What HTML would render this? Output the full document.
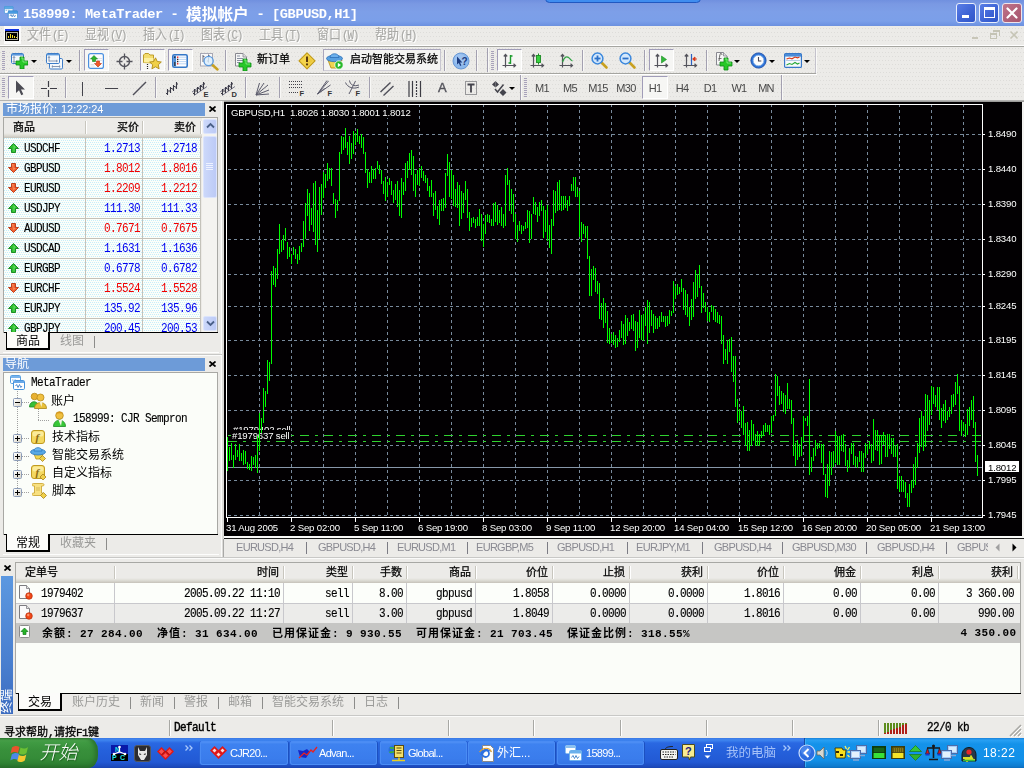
<!DOCTYPE html>
<html><head><meta charset="utf-8"><title>MetaTrader</title>
<style>
html,body{margin:0;padding:0;background:#ecebe8;}
body{width:1024px;height:768px;overflow:hidden;font-family:"Liberation Sans",sans-serif;font-size:11px;color:#000;}
#r{position:relative;width:1024px;height:768px;overflow:hidden;background:#ecebe8;}
#r span.a{will-change:transform;}
#r div,#r span.a,#r svg.a{position:absolute;box-sizing:border-box;}
.cj{font-family:"Liberation Sans","Noto Sans CJK SC",sans-serif;letter-spacing:0;white-space:nowrap;}
.ss{font-family:"Liberation Mono",monospace;font-size:11px;letter-spacing:-0.6px;white-space:nowrap;line-height:12px;-webkit-text-stroke:0.12px currentColor;transform:scaleY(1.143);transform-origin:0 100%;}
.th{font-family:"Liberation Sans",sans-serif;font-size:11px;letter-spacing:-0.7px;white-space:nowrap;}
.c9{font-family:"Liberation Sans",sans-serif;font-size:9.600px;letter-spacing:-0.17px;white-space:nowrap;color:#fff;line-height:10px;}
.hl{background:#fff;height:1px;}
.sh{background:#a5a5a0;height:1px;}
</style></head><body><svg width="0" height="0" style="position:absolute"><defs><pattern id="pd" width="6" height="8" patternUnits="userSpaceOnUse"><rect x="1" y="1" width="1" height="1" fill="#dddcd9"/><rect x="4" y="1" width="1" height="1" fill="#dddcd9"/><rect x="0" y="5" width="1" height="1" fill="#dddcd9"/><rect x="3" y="5" width="1" height="1" fill="#dddcd9"/></pattern><pattern id="pc" width="4" height="4" patternUnits="userSpaceOnUse"><rect x="0" y="0" width="1" height="1" fill="#c4eefc"/><rect x="2" y="0" width="1" height="1" fill="#c4eefc"/><rect x="1" y="2" width="1" height="1" fill="#c4eefc"/><rect x="3" y="2" width="1" height="1" fill="#c4eefc"/></pattern></defs></svg><div id="r">
<div style="left:0;top:0;width:1024px;height:26px;background:linear-gradient(#7090df 0,#7a99e3 4px,#7d9fe8 12px,#7b9fe9 21px,#7196e4 24px,#6c90de 26px);"></div>
<div style="left:545px;top:-6px;width:156px;height:9px;border-radius:6px;background:#3f8df0;border:1px solid #2158c0;"></div>
<svg class="a" style="left:4px;top:6px" width="14" height="13.200" viewBox="0 0 18 17">
 <rect x="0.5" y="0.5" width="11" height="9" rx="1.5" fill="#fff" stroke="#4a9ad8"/>
 <rect x="0.5" y="0.5" width="11" height="3" rx="1" fill="#5aa8e6" stroke="#4a9ad8"/>
 <rect x="5.5" y="6.5" width="12" height="10" rx="1.5" fill="#fff" stroke="#3a8ad0"/>
 <rect x="5.5" y="6.5" width="12" height="3" rx="1" fill="#4a9ee6" stroke="#3a8ad0"/>
 <path d="M7.5 13 l1.5 -2 l1.5 3 l1.5 -3 l1.5 3 l1.5 -2" fill="none" stroke="#3a7ac0" stroke-width="1"/>
 <path d="M2 5.500h2M5 5.500h2" stroke="#5a9ad0"/>
</svg>
<span class="a" style="left:23px;top:4px;color:#fff;font:bold 13.7px 'Liberation Mono',monospace;letter-spacing:-0.45px;white-space:nowrap;line-height:18px;">158999: MetaTrader - <span style="position:relative;top:1.500px;letter-spacing:0"><span class="cj" style="font-size:15.7px">模拟帐户</span></span> - [GBPUSD,H1]</span>
<!-- window buttons -->
<div style="left:956px;top:3px;width:20px;height:20px;border-radius:3px;border:1px solid #e8eefc;background:linear-gradient(135deg,#5a7ee6,#3c62d4 60%,#2f55c8);"></div>
<div style="left:962px;top:15px;width:7px;height:3px;background:#fff;"></div>
<div style="left:979px;top:3px;width:20px;height:20px;border-radius:3px;border:1px solid #e8eefc;background:linear-gradient(135deg,#5a7ee6,#3c62d4 60%,#2f55c8);"></div>
<div style="left:984px;top:7px;width:11px;height:11px;border:1px solid #fff;border-top-width:3px;"></div>
<div style="left:1002px;top:3px;width:20px;height:20px;border-radius:3px;border:1px solid #f0e4ea;background:linear-gradient(135deg,#c0748a,#b06078 60%,#a8566e);"></div>
<svg class="a" style="left:1002px;top:3px" width="20" height="20"><path d="M5.5 5.500l9 9M14.5 5.500l-9 9" stroke="#fff" stroke-width="2.2" stroke-linecap="round"/></svg>
<div style="left:0;top:26px;width:1024px;height:20px;background:#ecebe8;"></div><svg class="a" style="left:0;top:27px" width="1024" height="17" shape-rendering="crispEdges"><rect width="1024" height="17" fill="url(#pd)"/></svg><div style="left:4px;top:26px;width:17px;height:18px;background:#fbfbfa;"></div><svg class="a" style="left:5px;top:29px" width="14" height="12" viewBox="0 0 14 12"><rect width="14" height="12" fill="#000"/><rect width="14" height="2" fill="#1030e0"/><rect x="1.5" y="3.5" width="11" height="7" fill="#000" stroke="#b0b0a0" stroke-width="1"/><path d="M3.5 9v-2M5.500 9v-4M7.500 9v-3M9.500 9v-2M11.500 9v-1" stroke="#f0e020" stroke-width="1"/></svg><span class="a ss" style="left:28px;top:30px;color:#fff;"><span class="cj" style="font-size:12px">文件</span><span style="margin-left:1px;font-size:11px;letter-spacing:-1.2px">(<u>F</u>)</span></span><span class="a ss" style="left:27px;top:29px;color:#a9a9a6;"><span class="cj" style="font-size:12px">文件</span><span style="margin-left:1px;font-size:11px;letter-spacing:-1.2px">(<u>F</u>)</span></span><span class="a ss" style="left:86px;top:30px;color:#fff;"><span class="cj" style="font-size:12px">显视</span><span style="margin-left:1px;font-size:11px;letter-spacing:-1.2px">(<u>V</u>)</span></span><span class="a ss" style="left:85px;top:29px;color:#a9a9a6;"><span class="cj" style="font-size:12px">显视</span><span style="margin-left:1px;font-size:11px;letter-spacing:-1.2px">(<u>V</u>)</span></span><span class="a ss" style="left:144px;top:30px;color:#fff;"><span class="cj" style="font-size:12px">插入</span><span style="margin-left:1px;font-size:11px;letter-spacing:-1.2px">(<u>I</u>)</span></span><span class="a ss" style="left:143px;top:29px;color:#a9a9a6;"><span class="cj" style="font-size:12px">插入</span><span style="margin-left:1px;font-size:11px;letter-spacing:-1.2px">(<u>I</u>)</span></span><span class="a ss" style="left:202px;top:30px;color:#fff;"><span class="cj" style="font-size:12px">图表</span><span style="margin-left:1px;font-size:11px;letter-spacing:-1.2px">(<u>C</u>)</span></span><span class="a ss" style="left:201px;top:29px;color:#a9a9a6;"><span class="cj" style="font-size:12px">图表</span><span style="margin-left:1px;font-size:11px;letter-spacing:-1.2px">(<u>C</u>)</span></span><span class="a ss" style="left:260px;top:30px;color:#fff;"><span class="cj" style="font-size:12px">工具</span><span style="margin-left:1px;font-size:11px;letter-spacing:-1.2px">(<u>T</u>)</span></span><span class="a ss" style="left:259px;top:29px;color:#a9a9a6;"><span class="cj" style="font-size:12px">工具</span><span style="margin-left:1px;font-size:11px;letter-spacing:-1.2px">(<u>T</u>)</span></span><span class="a ss" style="left:318px;top:30px;color:#fff;"><span class="cj" style="font-size:12px">窗口</span><span style="margin-left:1px;font-size:11px;letter-spacing:-1.2px">(<u>W</u>)</span></span><span class="a ss" style="left:317px;top:29px;color:#a9a9a6;"><span class="cj" style="font-size:12px">窗口</span><span style="margin-left:1px;font-size:11px;letter-spacing:-1.2px">(<u>W</u>)</span></span><span class="a ss" style="left:376px;top:30px;color:#fff;"><span class="cj" style="font-size:12px">帮助</span><span style="margin-left:1px;font-size:11px;letter-spacing:-1.2px">(<u>H</u>)</span></span><span class="a ss" style="left:375px;top:29px;color:#a9a9a6;"><span class="cj" style="font-size:12px">帮助</span><span style="margin-left:1px;font-size:11px;letter-spacing:-1.2px">(<u>H</u>)</span></span><div style="left:972px;top:37px;width:6px;height:2px;background:#c8c6b8;"></div><div style="left:990px;top:33px;width:7px;height:6px;border:1px solid #c4c3b4;border-top-width:2px;"></div><div style="left:993px;top:30px;width:7px;height:6px;border:1px solid #c4c3b4;border-top-width:2px;border-left:0;border-bottom:0"></div><svg class="a" style="left:1009px;top:30px" width="10" height="10"><path d="M1.5 1.500l7 7M8.500 1.500l-7 7" stroke="#c6c5b6" stroke-width="1.6"/></svg><div class="hl" style="left:0;top:45px;width:1024px;"></div><div class="sh" style="left:0;top:46px;width:1024px;"></div><div style="left:0;top:47px;width:1024px;height:54px;background:#ecebe8;"></div><svg class="a" style="left:0;top:47px" width="1024" height="53" shape-rendering="crispEdges"><rect width="1024" height="53" fill="url(#pd)"/></svg><div class="sh" style="left:0;top:73px;width:816px;"></div><div class="hl" style="left:0;top:74px;width:817px;"></div><div class="sh" style="left:0;top:100px;width:1024px;background:#b4b4b2"></div><div style="left:2px;top:51px;width:3px;height:1px;background:#a8a2ba;"></div><div style="left:2px;top:53px;width:3px;height:1px;background:#a8a2ba;"></div><div style="left:2px;top:55px;width:3px;height:1px;background:#a8a2ba;"></div><div style="left:2px;top:57px;width:3px;height:1px;background:#a8a2ba;"></div><div style="left:2px;top:59px;width:3px;height:1px;background:#a8a2ba;"></div><div style="left:2px;top:61px;width:3px;height:1px;background:#a8a2ba;"></div><div style="left:2px;top:63px;width:3px;height:1px;background:#a8a2ba;"></div><div style="left:2px;top:65px;width:3px;height:1px;background:#a8a2ba;"></div><div style="left:2px;top:67px;width:3px;height:1px;background:#a8a2ba;"></div><div style="left:2px;top:69px;width:3px;height:1px;background:#a8a2ba;"></div><svg class="a" style="left:11px;top:53px" width="17" height="16" viewBox="0 0 17 16" ><rect x="0.5" y="0.5" width="12" height="10" rx="1.2" fill="#f4f8fc" stroke="#3c7cc8"/><rect x="1" y="1" width="11" height="1.6" fill="#5a98dc"/>
<path d="M3 3.500v6M1.800 5l1.200-1.500l1.200 1.500M1.800 8l1.200 1.500l1.200-1.500" stroke="#7a8ca8" fill="none" stroke-width="0.9"/>
<path d="M9 4h4v4h4v4h-4v4h-4v-4h-4v-4h4z" fill="#28c828" stroke="#0c8a14" stroke-width="0.8"/><path d="M10 5h2v4h4" stroke="#8cf08c" fill="none" stroke-width="0.8"/></svg><svg class="a" style="left:31px;top:60px" width="6" height="3" viewBox="0 0 6 3" ><path d="M0 0h6l-3 3z" fill="#000"/></svg><svg class="a" style="left:46px;top:53px" width="18" height="17" viewBox="0 0 18 17" ><rect x="3.5" y="5.5" width="13" height="10.5" rx="1.2" fill="#f4f8fc" stroke="#3c7cc8"/>
<rect x="0.5" y="0.5" width="13" height="10" rx="1.2" fill="#f4f8fc" stroke="#3c7cc8"/><rect x="1" y="1" width="12" height="1.4" fill="#5a98dc"/>
<path d="M3 3.500v5M3 8h8M2 5l1-1.500l1 1.500M10 7l1.500 1l-1.500 1" stroke="#7a8ca8" fill="none" stroke-width="0.9"/>
<path d="M6 13.500h8M7 12.500l-1.200 1l1.200 1M13 12.500l1.200 1l-1.200 1" stroke="#7a8ca8" fill="none" stroke-width="0.9"/></svg><svg class="a" style="left:66px;top:60px" width="6" height="3" viewBox="0 0 6 3" ><path d="M0 0h6l-3 3z" fill="#000"/></svg><div style="left:79px;top:50px;width:1px;height:21px;background:#a3a0b0;"></div><div style="left:80px;top:50px;width:1px;height:21px;background:#f8f8f6;"></div><div style="left:84px;top:49px;width:25px;height:22px;background:#f6f6f4;border:1px solid #a09cb8;border-right-color:#fff;border-bottom-color:#fff;"></div><svg class="a" style="left:88px;top:53px" width="16" height="16" viewBox="0 0 16 16" ><rect x="0.6" y="0.6" width="14.8" height="14.8" rx="2" fill="#fdfdfd" stroke="#4a90e0" stroke-width="1.2"/>
<path d="M9 5.500h5M9 7.500h5M2.500 11.500h4M2.500 13h4" stroke="#d8dce4" stroke-width="0.8"/>
<path d="M6 2.500l3.500 3.500h-2v2.500h-3v-2.500h-2z" fill="#2cb42c" stroke="#128018" stroke-width="0.6"/>
<path d="M10 14l3.500-3.500h-2v-2.500h-3v2.500h-2z" fill="#f05a28" stroke="#c03410" stroke-width="0.6"/></svg><svg class="a" style="left:116px;top:53px" width="17" height="17" viewBox="0 0 17 17" ><circle cx="8.5" cy="8.5" r="5" fill="none" stroke="#54545c" stroke-width="1.4"/><path d="M8.5 0.500v6M8.500 10.500v6M0.500 8.500h6M10.500 8.500h6" stroke="#54545c" stroke-width="1.3"/></svg><div style="left:140px;top:49px;width:25px;height:22px;background:#f6f6f4;border:1px solid #a09cb8;border-right-color:#fff;border-bottom-color:#fff;"></div><svg class="a" style="left:143px;top:53px" width="19" height="17" viewBox="0 0 19 17" ><path d="M0.5 9.500v-7.500l1.500-1.500h3.500l1.500 1.500h3.500v8z" fill="#f4dc6c" stroke="#b8941c" stroke-width="0.9"/><path d="M1 5h9.500v4.500h-9.500z" fill="#fcf0a0"/>
<path d="M4.500 11v1M4.500 13v1M4.500 15v1" stroke="#222" stroke-width="1.2"/>
<path d="M12.500 4.800l1.800 3.700l4 .5l-3 2.800l.8 4l-3.600-2l-3.600 2l.8-4l-3-2.800l4-.5z" fill="#f0d048" stroke="#b08a14" stroke-width="0.9"/></svg><div style="left:168px;top:49px;width:25px;height:22px;background:#f6f6f4;border:1px solid #a09cb8;border-right-color:#fff;border-bottom-color:#fff;"></div><svg class="a" style="left:172px;top:54px" width="16" height="14" viewBox="0 0 16 14" ><rect x="0.8" y="0.8" width="14.4" height="12.4" rx="1.5" fill="#fff" stroke="#3478c8" stroke-width="1.6"/>
<rect x="1.5" y="1.5" width="2.6" height="11" fill="#4a8cd8"/>
<path d="M7 3.200h7M7 5.400h7M7 7.600h7M7 9.800h7" stroke="#a8ccf0" stroke-width="0.8"/>
<rect x="5" y="2.5" width="1.4" height="1.4" fill="#e82020"/><rect x="5" y="4.7" width="1.4" height="1.4" fill="#222"/><rect x="5" y="6.9" width="1.4" height="1.4" fill="#222"/><rect x="5" y="9.1" width="1.4" height="1.4" fill="#e82020"/><rect x="2.2" y="2.5" width="1.2" height="1.4" fill="#111"/><rect x="2.2" y="8" width="1.2" height="4" fill="#333"/></svg><svg class="a" style="left:200px;top:53px" width="19" height="18" viewBox="0 0 19 18" ><rect x="0.5" y="0.5" width="12" height="12.5" fill="#f8f8f8" stroke="#a8a8b4"/><path d="M3 2v7M3 3.500h1.500M8.500 1.500v8M8.500 3h1.500M7 8h1.500" stroke="#6a6a78" stroke-width="1"/>
<path d="M12 11.500l5.500 5" stroke="#c8a020" stroke-width="2.4" stroke-linecap="round"/>
<circle cx="8.6" cy="8" r="4.6" fill="#d8ecfc" fill-opacity="0.8" stroke="#5a98dc" stroke-width="1.3"/></svg><div style="left:225px;top:50px;width:1px;height:21px;background:#a3a0b0;"></div><div style="left:226px;top:50px;width:1px;height:21px;background:#f8f8f6;"></div><svg class="a" style="left:235px;top:53px" width="17" height="18" viewBox="0 0 17 18" ><path d="M0.5 0.500h7.500l3.500 3.500v9h-11z" fill="#f6f6f6" stroke="#888890"/><path d="M8 0.500v3.500h3.500" fill="#ddd" stroke="#888890" stroke-width="0.8"/>
<path d="M2 3h3M2 5.500h6M2 7.500h6M2 9.500h3" stroke="#8890a0" stroke-width="1"/>
<path d="M8 6h4v4h4v4h-4v4h-4v-4h-4v-4h4z" fill="#28c828" stroke="#0c8a14" stroke-width="0.8"/><path d="M9 7h2v4h4" stroke="#8cf08c" fill="none" stroke-width="0.8"/></svg><span class="a" style="left:257px;top:54px;line-height:11px;"><span class="cj" style="font-size:11px;-webkit-text-stroke:0.25px currentColor">新订单</span></span><svg class="a" style="left:298px;top:52px" width="18" height="18" viewBox="0 0 18 18" ><path d="M9 0.800l8 8l-8 8l-8-8z" fill="#f4d44c" stroke="#c09a18" stroke-width="1.2" stroke-linejoin="round"/><path d="M9 3l5.800 5.800l-5.800 5.800" fill="#e8c030" opacity="0.6"/>
<path d="M9 4.500v5.500" stroke="#5a3a10" stroke-width="2"/><circle cx="9" cy="12.4" r="1.1" fill="#5a3a10"/></svg><div style="left:323px;top:49px;width:118px;height:22px;background:#f4f4f2;border:1px solid #aaa6bc;border-right-color:#c8c6d0;border-bottom-color:#d0ced6;"></div><svg class="a" style="left:326px;top:52px" width="18" height="18" viewBox="0 0 18 18" ><path d="M2 8l3 8h8l3-8z" fill="#f0d450" stroke="#b8941c" stroke-width="0.9"/>
<ellipse cx="8.5" cy="6.5" rx="8" ry="3.2" fill="#58a0e0" stroke="#2c70b8" stroke-width="0.8"/><path d="M4 5.500c0-5 9-5 9 0z" fill="#6cb0ec" stroke="#2c70b8" stroke-width="0.8"/>
<circle cx="13" cy="13" r="4.2" fill="#28b828" stroke="#fff" stroke-width="0.8"/><path d="M11.800 10.800l3.200 2.200l-3.200 2.200z" fill="#fff"/></svg><span class="a" style="left:350px;top:54px;line-height:11px;"><span class="cj" style="font-size:11px;-webkit-text-stroke:0.25px currentColor">启动智能交易系统</span></span><div style="left:444px;top:50px;width:1px;height:21px;background:#a3a0b0;"></div><div style="left:445px;top:50px;width:1px;height:21px;background:#f8f8f6;"></div><svg class="a" style="left:452px;top:52px" width="18" height="18" viewBox="0 0 18 18" ><circle cx="9" cy="9" r="8" fill="#8cb8ec" stroke="#6a98d4" stroke-width="1"/><circle cx="8" cy="7.5" r="5.5" fill="#a4c8f4" opacity="0.7"/>
<path d="M5 4.500v8l1.800-1.600l1.400 3l1.200-.6l-1.400-2.800h2.400z" fill="#1c3c80"/><text x="9.6" y="13" font-family="Liberation Sans" font-weight="bold" font-size="10" fill="#1c3c80">?</text></svg><div style="left:476px;top:50px;width:1px;height:21px;background:#a3a0b0;"></div><div style="left:477px;top:50px;width:1px;height:21px;background:#f8f8f6;"></div><div style="left:487px;top:48px;width:1px;height:24px;background:#a3a0b0;"></div><div style="left:488px;top:48px;width:1px;height:24px;background:#f8f8f6;"></div><div style="left:491px;top:51px;width:3px;height:1px;background:#a8a2ba;"></div><div style="left:491px;top:53px;width:3px;height:1px;background:#a8a2ba;"></div><div style="left:491px;top:55px;width:3px;height:1px;background:#a8a2ba;"></div><div style="left:491px;top:57px;width:3px;height:1px;background:#a8a2ba;"></div><div style="left:491px;top:59px;width:3px;height:1px;background:#a8a2ba;"></div><div style="left:491px;top:61px;width:3px;height:1px;background:#a8a2ba;"></div><div style="left:491px;top:63px;width:3px;height:1px;background:#a8a2ba;"></div><div style="left:491px;top:65px;width:3px;height:1px;background:#a8a2ba;"></div><div style="left:491px;top:67px;width:3px;height:1px;background:#a8a2ba;"></div><div style="left:491px;top:69px;width:3px;height:1px;background:#a8a2ba;"></div><div style="left:497px;top:49px;width:25px;height:22px;background:#f6f6f4;border:1px solid #a09cb8;border-right-color:#fff;border-bottom-color:#fff;"></div><svg class="a" style="left:502px;top:53px" width="15" height="16" viewBox="0 0 15 16" ><path d="M3.5 1.500v13M0.500 12.500h13M1.800 3.500l1.700-2l1.700 2M11.500 10.800l2 1.700l-2 1.700" stroke="#54545c" fill="none" stroke-width="1.2"/><path d="M8.500 2v9M8.500 3h2M6.500 10h2" stroke="#1c9c2c" stroke-width="1.4" fill="none"/></svg><svg class="a" style="left:530px;top:53px" width="15" height="16" viewBox="0 0 15 16" ><path d="M3.5 1.500v13M0.500 12.500h13M1.800 3.500l1.700-2l1.700 2M11.500 10.800l2 1.700l-2 1.700" stroke="#54545c" fill="none" stroke-width="1.2"/><path d="M8.500 0.500v11" stroke="#1c8c24" stroke-width="1"/><rect x="6.5" y="2.5" width="4" height="7" fill="#38d040" stroke="#1c8c24" stroke-width="0.9"/></svg><svg class="a" style="left:559px;top:53px" width="15" height="16" viewBox="0 0 15 16" ><path d="M3.5 1.500v13M0.500 12.500h13M1.800 3.500l1.700-2l1.700 2M11.500 10.800l2 1.700l-2 1.700" stroke="#54545c" fill="none" stroke-width="1.2"/><path d="M3.500 9c2-5 4-6 6-4.500c1.500 1 2.500 3 4 3.500" stroke="#2ca040" fill="none" stroke-width="1.3"/></svg><div style="left:582px;top:50px;width:1px;height:21px;background:#a3a0b0;"></div><div style="left:583px;top:50px;width:1px;height:21px;background:#f8f8f6;"></div><svg class="a" style="left:591px;top:52px" width="18" height="18" viewBox="0 0 18 18" ><path d="M10.5 10.500l5 5" stroke="#c8a020" stroke-width="2.6" stroke-linecap="round"/><circle cx="6.5" cy="6.5" r="5.4" fill="#d4e8fc" stroke="#3c88dc" stroke-width="1.5"/><path d="M3.500 6.500h6" stroke="#2c70c8" stroke-width="1.8"/><path d="M6.500 3.500v6" stroke="#2c70c8" stroke-width="1.8"/></svg><svg class="a" style="left:619px;top:52px" width="18" height="18" viewBox="0 0 18 18" ><path d="M10.5 10.500l5 5" stroke="#c8a020" stroke-width="2.6" stroke-linecap="round"/><circle cx="6.5" cy="6.5" r="5.4" fill="#d4e8fc" stroke="#3c88dc" stroke-width="1.5"/><path d="M3.500 6.500h6" stroke="#2c70c8" stroke-width="1.8"/></svg><div style="left:644px;top:50px;width:1px;height:21px;background:#a3a0b0;"></div><div style="left:645px;top:50px;width:1px;height:21px;background:#f8f8f6;"></div><div style="left:649px;top:49px;width:25px;height:22px;background:#f6f6f4;border:1px solid #a09cb8;border-right-color:#fff;border-bottom-color:#fff;"></div><svg class="a" style="left:654px;top:53px" width="15" height="16" viewBox="0 0 15 16" ><path d="M3.5 1.500v13M0.500 12.500h13M1.800 3.500l1.700-2l1.700 2M11.500 10.800l2 1.700l-2 1.700" stroke="#54545c" fill="none" stroke-width="1.2"/><path d="M7.500 3l5 3.500l-5 3.500z" fill="#30b838" stroke="#1c8c24" stroke-width="0.6"/></svg><svg class="a" style="left:683px;top:53px" width="15" height="16" viewBox="0 0 15 16" ><path d="M3.5 1.500v13M0.500 12.500h13M1.800 3.500l1.700-2l1.700 2M11.500 10.800l2 1.700l-2 1.700" stroke="#54545c" fill="none" stroke-width="1.2"/><path d="M8.500 1v11" stroke="#2c60c0" stroke-width="1.2"/><path d="M14 6h-4M12 4l-2.400 2l2.400 2z" stroke="#d83818" fill="#d83818" stroke-width="0.9"/></svg><div style="left:706px;top:50px;width:1px;height:21px;background:#a3a0b0;"></div><div style="left:707px;top:50px;width:1px;height:21px;background:#f8f8f6;"></div><svg class="a" style="left:716px;top:52px" width="17" height="19" viewBox="0 0 17 19" ><path d="M0.5 0.500h7l3.500 3.500v9h-10.500z" fill="#f6f6f6" stroke="#888890"/><path d="M7.500 0.500v3.500h3.500" fill="#ddd" stroke="#888890" stroke-width="0.8"/>
<path d="M3 9c1-9 2-9 3-6" stroke="#555" fill="none" stroke-width="0.9"/><path d="M2.500 6.500h3" stroke="#555" stroke-width="0.8"/>
<path d="M8 6h4v4h4v4h-4v4h-4v-4h-4v-4h4z" fill="#28c828" stroke="#0c8a14" stroke-width="0.8"/><path d="M9 7h2v4h4" stroke="#8cf08c" fill="none" stroke-width="0.8"/></svg><svg class="a" style="left:734px;top:60px" width="6" height="3" viewBox="0 0 6 3" ><path d="M0 0h6l-3 3z" fill="#000"/></svg><svg class="a" style="left:750px;top:52px" width="17" height="17" viewBox="0 0 17 17" ><circle cx="8.500" cy="8.500" r="7.600" fill="#2c74d8" stroke="#1c4ca8" stroke-width="0.9"/><circle cx="8.500" cy="8.500" r="5.300" fill="#fcfcfc" stroke="#8cb4e8" stroke-width="0.8"/><path d="M8.500 5v4h2.800" stroke="#445" fill="none" stroke-width="1.1"/></svg><svg class="a" style="left:769px;top:60px" width="6" height="3" viewBox="0 0 6 3" ><path d="M0 0h6l-3 3z" fill="#000"/></svg><svg class="a" style="left:784px;top:53px" width="18" height="15" viewBox="0 0 18 15" ><rect x="0.6" y="0.6" width="16.8" height="13.800" rx="1" fill="#f8fafc" stroke="#3878c8" stroke-width="1.2"/><rect x="1" y="1" width="16" height="2.600" fill="#4a8cd8"/>
<path d="M2 7.500h14" stroke="#9cb8d8" stroke-width="0.7"/>
<path d="M2.500 6l3-1l2.500 .8l3-1.800l2.500 .8l2-.8" stroke="#d83818" fill="none" stroke-width="1.1"/><path d="M2.500 12l3-1.500l2.500 1l3-2l2.500 1.500l2-1" stroke="#28a838" fill="none" stroke-width="1.1"/></svg><svg class="a" style="left:804px;top:60px" width="6" height="3" viewBox="0 0 6 3" ><path d="M0 0h6l-3 3z" fill="#000"/></svg><div style="left:815px;top:48px;width:1px;height:25px;background:#c4c2cc;"></div><div style="left:816px;top:48px;width:1px;height:25px;background:#fafaf8;"></div><div style="left:2px;top:78px;width:3px;height:1px;background:#a8a2ba;"></div><div style="left:2px;top:80px;width:3px;height:1px;background:#a8a2ba;"></div><div style="left:2px;top:82px;width:3px;height:1px;background:#a8a2ba;"></div><div style="left:2px;top:84px;width:3px;height:1px;background:#a8a2ba;"></div><div style="left:2px;top:86px;width:3px;height:1px;background:#a8a2ba;"></div><div style="left:2px;top:88px;width:3px;height:1px;background:#a8a2ba;"></div><div style="left:2px;top:90px;width:3px;height:1px;background:#a8a2ba;"></div><div style="left:2px;top:92px;width:3px;height:1px;background:#a8a2ba;"></div><div style="left:2px;top:94px;width:3px;height:1px;background:#a8a2ba;"></div><div style="left:2px;top:96px;width:3px;height:1px;background:#a8a2ba;"></div><div style="left:8px;top:76px;width:26px;height:23px;background:#f6f6f4;border:1px solid #a09cb8;border-right-color:#fff;border-bottom-color:#fff;"></div><svg class="a" style="left:15px;top:80px" width="11" height="16" viewBox="0 0 11 16" ><path d="M1 0.500v12.500l3-2.800l2.300 5l2-0.900l-2.300-4.900h4z" fill="#4c4c54"/></svg><svg class="a" style="left:41px;top:81px" width="16" height="16" viewBox="0 0 16 16" ><path d="M7.500 0v6M7.500 9v7M0 7.500h6M9 7.500h7" stroke="#3c3c44" stroke-width="1.2"/></svg><div style="left:65px;top:77px;width:1px;height:21px;background:#a3a0b0;"></div><div style="left:66px;top:77px;width:1px;height:21px;background:#f8f8f6;"></div><div style="left:82px;top:82px;width:1.4px;height:14px;background:#44444c;"></div><div style="left:105px;top:87.500px;width:13px;height:1.4px;background:#44444c;"></div><svg class="a" style="left:132px;top:81px" width="15" height="15" viewBox="0 0 15 15" ><path d="M1 14l13-13" stroke="#50505a" stroke-width="1.4"/></svg><div style="left:155px;top:77px;width:1px;height:21px;background:#a3a0b0;"></div><div style="left:156px;top:77px;width:1px;height:21px;background:#f8f8f6;"></div><svg class="a" style="left:165px;top:81px" width="14" height="15" viewBox="0 0 14 15" ><path d="M2.500 8v6M1 12.500h1.500M2.500 10h1.500M5.500 6v6M4 10h1.500M5.500 7.500h1.500M8.500 4v6M7 8h1.500M8.500 5.500h1.500M11.500 1v7M10 6h1.500M11.500 3h1.500" stroke="#3c3c48" stroke-width="1.1" fill="none"/></svg><svg class="a" style="left:192px;top:81px" width="17" height="16" viewBox="0 0 17 16" ><path d="M0 11l13-9M2 14.500l13-9" stroke="#6c6c80" stroke-width="0.9"/><path d="M2.500 8v6M1 12.500h1.500M2.500 10h1.500M5.500 6v6M4 10h1.500M5.500 7.500h1.500M8.500 4v6M7 8h1.500M8.500 5.500h1.500M11.500 1v7M10 6h1.500M11.500 3h1.500" stroke="#3c3c48" stroke-width="1.1" fill="none"/><text x="11.500" y="16" font-family="Liberation Sans" font-weight="bold" font-size="7.500" fill="#333">E</text></svg><svg class="a" style="left:220px;top:81px" width="17" height="16" viewBox="0 0 17 16" ><path d="M0 11l13-9M2 14.500l13-9" stroke="#6c6c80" stroke-width="0.9"/><path d="M2.500 8v6M1 12.500h1.500M2.500 10h1.500M5.500 6v6M4 10h1.500M5.500 7.500h1.500M8.500 4v6M7 8h1.500M8.500 5.500h1.500M11.500 1v7M10 6h1.500M11.500 3h1.500" stroke="#3c3c48" stroke-width="1.1" fill="none"/><text x="11.500" y="16" font-family="Liberation Sans" font-weight="bold" font-size="7.500" fill="#333">D</text></svg><div style="left:245px;top:77px;width:1px;height:21px;background:#a3a0b0;"></div><div style="left:246px;top:77px;width:1px;height:21px;background:#f8f8f6;"></div><svg class="a" style="left:255px;top:82px" width="15" height="14" viewBox="0 0 15 14" ><path d="M1 13l3.500-12M1 13l8-12M1 13l12-10M1 13l13-5M1 13l13-1" stroke="#5c5c6c" stroke-width="1" fill="none"/></svg><div style="left:279px;top:77px;width:1px;height:21px;background:#a3a0b0;"></div><div style="left:280px;top:77px;width:1px;height:21px;background:#f8f8f6;"></div><svg class="a" style="left:289px;top:80px" width="16" height="17" viewBox="0 0 16 17" ><path d="M0 1.500h13M0 4.500h13M0 7.500h13M0 12.500h9" stroke="#44444c" stroke-width="1" stroke-dasharray="1 1"/><text x="10.5" y="16" font-family="Liberation Sans" font-weight="bold" font-size="7.500" fill="#333">F</text></svg><svg class="a" style="left:317px;top:80px" width="16" height="17" viewBox="0 0 16 17" ><path d="M0.500 14l11-13M0.500 14l9.500-13.500M0.500 14l13-9M0.500 14l7-5.500" stroke="#5c5c6c" stroke-width="1" fill="none"/><text x="10.5" y="16" font-family="Liberation Sans" font-weight="bold" font-size="7.500" fill="#333">F</text></svg><svg class="a" style="left:345px;top:80px" width="16" height="17" viewBox="0 0 16 17" ><path d="M4 14l6.500-13M0.500 2.500c2 5 8 7 13.500 4.500M4.500 0.500c0.500 4 4 6.500 9.500 4.500" stroke="#5c5c6c" stroke-width="1" fill="none"/><text x="10.5" y="16" font-family="Liberation Sans" font-weight="bold" font-size="7.500" fill="#333">F</text></svg><div style="left:369px;top:77px;width:1px;height:21px;background:#a3a0b0;"></div><div style="left:370px;top:77px;width:1px;height:21px;background:#f8f8f6;"></div><svg class="a" style="left:380px;top:82px" width="15" height="14" viewBox="0 0 15 14" ><path d="M0.500 10l10-9.500M3.500 13.500l10-9.500" stroke="#50505a" stroke-width="1.400"/></svg><svg class="a" style="left:408px;top:81px" width="14" height="16" viewBox="0 0 14 16" ><path d="M1 0v16M4.500 0v16M12.500 0v16" stroke="#3c3c44" stroke-width="1.200"/><path d="M8.500 0v16" stroke="#3c3c44" stroke-width="1.200" stroke-dasharray="2 1"/></svg><span class="a" style="left:438px;top:80px;font:13px 'Liberation Sans';color:#54545c;-webkit-text-stroke:0.4px #54545c;line-height:16px">A</span><svg class="a" style="left:464px;top:80px" width="14" height="16" viewBox="0 0 14 16" ><rect x="1.500" y="1.500" width="11" height="13" fill="none" stroke="#44444c" stroke-width="1" stroke-dasharray="1 1"/><path d="M3.500 4.500h7M7 4.500v8" stroke="#44444c" stroke-width="1.800"/></svg><svg class="a" style="left:492px;top:81px" width="15" height="15" viewBox="0 0 15 15" ><path d="M3.500 0l3.500 3.500l-3.500 3z M11 8l3.500 3.500l-3.500 3.500l-3.500-3.500z" fill="#44444c"/><path d="M3.500 0l-3.500 3.500l3.500 3z" fill="#44444c"/><path d="M3 8l2.500 3l6-7.500" stroke="#44444c" stroke-width="1.500" fill="none"/></svg><svg class="a" style="left:509px;top:87px" width="6" height="3" viewBox="0 0 6 3" ><path d="M0 0h6l-3 3z" fill="#000"/></svg><div style="left:520px;top:75px;width:1px;height:25px;background:#a3a0b0;"></div><div style="left:521px;top:75px;width:1px;height:25px;background:#f8f8f6;"></div><div style="left:524px;top:78px;width:3px;height:1px;background:#a8a2ba;"></div><div style="left:524px;top:80px;width:3px;height:1px;background:#a8a2ba;"></div><div style="left:524px;top:82px;width:3px;height:1px;background:#a8a2ba;"></div><div style="left:524px;top:84px;width:3px;height:1px;background:#a8a2ba;"></div><div style="left:524px;top:86px;width:3px;height:1px;background:#a8a2ba;"></div><div style="left:524px;top:88px;width:3px;height:1px;background:#a8a2ba;"></div><div style="left:524px;top:90px;width:3px;height:1px;background:#a8a2ba;"></div><div style="left:524px;top:92px;width:3px;height:1px;background:#a8a2ba;"></div><div style="left:524px;top:94px;width:3px;height:1px;background:#a8a2ba;"></div><div style="left:524px;top:96px;width:3px;height:1px;background:#a8a2ba;"></div><div style="left:642px;top:76px;width:26px;height:23px;background:#f6f6f4;border:1px solid #a09cb8;border-right-color:#fff;border-bottom-color:#fff;"></div><span class="a th" style="left:521.5px;top:82px;width:40px;text-align:center;color:#484848;line-height:13px;">M1</span><span class="a th" style="left:550px;top:82px;width:40px;text-align:center;color:#484848;line-height:13px;">M5</span><span class="a th" style="left:578px;top:82px;width:40px;text-align:center;color:#484848;line-height:13px;">M15</span><span class="a th" style="left:606.3px;top:82px;width:40px;text-align:center;color:#484848;line-height:13px;">M30</span><span class="a th" style="left:634.5px;top:82px;width:40px;text-align:center;color:#484848;line-height:13px;">H1</span><span class="a th" style="left:661.6px;top:82px;width:40px;text-align:center;color:#484848;line-height:13px;">H4</span><span class="a th" style="left:690.3px;top:82px;width:40px;text-align:center;color:#484848;line-height:13px;">D1</span><span class="a th" style="left:719px;top:82px;width:40px;text-align:center;color:#484848;line-height:13px;">W1</span><span class="a th" style="left:745.8px;top:82px;width:40px;text-align:center;color:#484848;line-height:13px;">MN</span><div style="left:781px;top:75px;width:1px;height:25px;background:#a3a0b0;"></div><div style="left:782px;top:75px;width:1px;height:25px;background:#f8f8f6;"></div><div style="left:0;top:101px;width:224px;height:458px;background:#ecebe8;"></div><div style="left:221px;top:101px;width:1px;height:458px;background:#fbfbfa;"></div><div style="left:222px;top:101px;width:2px;height:458px;background:#dcdbd8;"></div><div style="left:3px;top:103px;width:202px;height:13px;background:#6d9bd8;"></div><span class="a" style="left:6px;top:103px;color:#fff;line-height:13px;white-space:nowrap;font-size:11px;"><span class="cj" style="font-size:12px">市场报价</span>:</span><span class="a" style="left:61px;top:103px;color:#fff;line-height:13px;white-space:nowrap;font-size:11px;letter-spacing:-0.05px">12:22:24</span><svg class="a" style="left:209px;top:106px" width="7" height="6" viewBox="0 0 7 6" ><path d="M0.500 0.500l6 5M6.500 0.500l-6 5" stroke="#000" stroke-width="1.700"/></svg><div style="left:3px;top:117px;width:215px;height:216px;border:1px solid #a8a8a4;background:#eceae6;"></div><div style="left:4px;top:118px;width:198px;height:20px;background:linear-gradient(#ecebe8 0,#ecebe8 15px,#e0dfd8 17px,#cfccc4 19px,#c4c1b8 20px);"></div><div style="left:85px;top:121px;width:1px;height:13px;background:#c8c6be;"></div><div style="left:86px;top:121px;width:1px;height:13px;background:#fff;"></div><div style="left:142px;top:121px;width:1px;height:13px;background:#c8c6be;"></div><div style="left:143px;top:121px;width:1px;height:13px;background:#fff;"></div><div style="left:200px;top:121px;width:1px;height:13px;background:#c8c6be;"></div><div style="left:201px;top:121px;width:1px;height:13px;background:#fff;"></div><span class="a" style="left:13px;top:122px;line-height:11px;"><span class="cj" style="font-size:11px;-webkit-text-stroke:0.25px currentColor">商品</span></span><span class="a" style="left:117px;top:122px;line-height:11px;"><span class="cj" style="font-size:11px;-webkit-text-stroke:0.25px currentColor">买价</span></span><span class="a" style="left:174px;top:122px;line-height:11px;"><span class="cj" style="font-size:11px;-webkit-text-stroke:0.25px currentColor">卖价</span></span><div style="left:4px;top:138px;width:197px;height:194px;overflow:hidden;background:#fcfef9;"><svg class="a" style="left:0;top:0" width="198" height="194" shape-rendering="crispEdges"><rect width="198" height="194" fill="url(#pc)"/></svg><div style="left:0;top:20px;width:198px;height:1px;background:#c4c2ba;"></div><svg class="a" style="left:4px;top:5px" width="11" height="10" viewBox="0 0 11 10"><path d="M5.500 0.500l5 5h-3v4h-4v-4h-3z" fill="#30c030" stroke="#108418" stroke-width="0.900" stroke-linejoin="round"/><path d="M5.500 2l2.500 2.500h-1.500v4h-1" fill="#7ce87c" opacity="0.700"/></svg><span class="a ss" style="left:20px;top:5px;">USDCHF</span><span class="a ss" style="left:82px;width:54px;text-align:right;top:5px;color:#0000f0;-webkit-text-stroke:0">1.2713</span><span class="a ss" style="left:139px;width:54px;text-align:right;top:5px;color:#0000f0;-webkit-text-stroke:0">1.2718</span><div style="left:0;top:40px;width:198px;height:1px;background:#c4c2ba;"></div><svg class="a" style="left:4px;top:25px" width="11" height="10" viewBox="0 0 11 10"><path d="M5.500 9.500l5-5h-3v-4h-4v4h-3z" fill="#f06030" stroke="#b83410" stroke-width="0.900" stroke-linejoin="round"/><path d="M4 1h1.500v4h2l-2 2.500" fill="#fca070" opacity="0.700"/></svg><span class="a ss" style="left:20px;top:25px;">GBPUSD</span><span class="a ss" style="left:82px;width:54px;text-align:right;top:25px;color:#f00000;-webkit-text-stroke:0">1.8012</span><span class="a ss" style="left:139px;width:54px;text-align:right;top:25px;color:#f00000;-webkit-text-stroke:0">1.8016</span><div style="left:0;top:60px;width:198px;height:1px;background:#c4c2ba;"></div><svg class="a" style="left:4px;top:45px" width="11" height="10" viewBox="0 0 11 10"><path d="M5.500 9.500l5-5h-3v-4h-4v4h-3z" fill="#f06030" stroke="#b83410" stroke-width="0.900" stroke-linejoin="round"/><path d="M4 1h1.500v4h2l-2 2.500" fill="#fca070" opacity="0.700"/></svg><span class="a ss" style="left:20px;top:45px;">EURUSD</span><span class="a ss" style="left:82px;width:54px;text-align:right;top:45px;color:#f00000;-webkit-text-stroke:0">1.2209</span><span class="a ss" style="left:139px;width:54px;text-align:right;top:45px;color:#f00000;-webkit-text-stroke:0">1.2212</span><div style="left:0;top:80px;width:198px;height:1px;background:#c4c2ba;"></div><svg class="a" style="left:4px;top:65px" width="11" height="10" viewBox="0 0 11 10"><path d="M5.500 0.500l5 5h-3v4h-4v-4h-3z" fill="#30c030" stroke="#108418" stroke-width="0.900" stroke-linejoin="round"/><path d="M5.500 2l2.500 2.500h-1.500v4h-1" fill="#7ce87c" opacity="0.700"/></svg><span class="a ss" style="left:20px;top:65px;">USDJPY</span><span class="a ss" style="left:82px;width:54px;text-align:right;top:65px;color:#0000f0;-webkit-text-stroke:0">111.30</span><span class="a ss" style="left:139px;width:54px;text-align:right;top:65px;color:#0000f0;-webkit-text-stroke:0">111.33</span><div style="left:0;top:100px;width:198px;height:1px;background:#c4c2ba;"></div><svg class="a" style="left:4px;top:85px" width="11" height="10" viewBox="0 0 11 10"><path d="M5.500 9.500l5-5h-3v-4h-4v4h-3z" fill="#f06030" stroke="#b83410" stroke-width="0.900" stroke-linejoin="round"/><path d="M4 1h1.500v4h2l-2 2.500" fill="#fca070" opacity="0.700"/></svg><span class="a ss" style="left:20px;top:85px;">AUDUSD</span><span class="a ss" style="left:82px;width:54px;text-align:right;top:85px;color:#f00000;-webkit-text-stroke:0">0.7671</span><span class="a ss" style="left:139px;width:54px;text-align:right;top:85px;color:#f00000;-webkit-text-stroke:0">0.7675</span><div style="left:0;top:120px;width:198px;height:1px;background:#c4c2ba;"></div><svg class="a" style="left:4px;top:105px" width="11" height="10" viewBox="0 0 11 10"><path d="M5.500 0.500l5 5h-3v4h-4v-4h-3z" fill="#30c030" stroke="#108418" stroke-width="0.900" stroke-linejoin="round"/><path d="M5.500 2l2.500 2.500h-1.500v4h-1" fill="#7ce87c" opacity="0.700"/></svg><span class="a ss" style="left:20px;top:105px;">USDCAD</span><span class="a ss" style="left:82px;width:54px;text-align:right;top:105px;color:#0000f0;-webkit-text-stroke:0">1.1631</span><span class="a ss" style="left:139px;width:54px;text-align:right;top:105px;color:#0000f0;-webkit-text-stroke:0">1.1636</span><div style="left:0;top:140px;width:198px;height:1px;background:#c4c2ba;"></div><svg class="a" style="left:4px;top:125px" width="11" height="10" viewBox="0 0 11 10"><path d="M5.500 0.500l5 5h-3v4h-4v-4h-3z" fill="#30c030" stroke="#108418" stroke-width="0.900" stroke-linejoin="round"/><path d="M5.500 2l2.500 2.500h-1.500v4h-1" fill="#7ce87c" opacity="0.700"/></svg><span class="a ss" style="left:20px;top:125px;">EURGBP</span><span class="a ss" style="left:82px;width:54px;text-align:right;top:125px;color:#0000f0;-webkit-text-stroke:0">0.6778</span><span class="a ss" style="left:139px;width:54px;text-align:right;top:125px;color:#0000f0;-webkit-text-stroke:0">0.6782</span><div style="left:0;top:160px;width:198px;height:1px;background:#c4c2ba;"></div><svg class="a" style="left:4px;top:145px" width="11" height="10" viewBox="0 0 11 10"><path d="M5.500 9.500l5-5h-3v-4h-4v4h-3z" fill="#f06030" stroke="#b83410" stroke-width="0.900" stroke-linejoin="round"/><path d="M4 1h1.500v4h2l-2 2.500" fill="#fca070" opacity="0.700"/></svg><span class="a ss" style="left:20px;top:145px;">EURCHF</span><span class="a ss" style="left:82px;width:54px;text-align:right;top:145px;color:#f00000;-webkit-text-stroke:0">1.5524</span><span class="a ss" style="left:139px;width:54px;text-align:right;top:145px;color:#f00000;-webkit-text-stroke:0">1.5528</span><div style="left:0;top:180px;width:198px;height:1px;background:#c4c2ba;"></div><svg class="a" style="left:4px;top:165px" width="11" height="10" viewBox="0 0 11 10"><path d="M5.500 0.500l5 5h-3v4h-4v-4h-3z" fill="#30c030" stroke="#108418" stroke-width="0.900" stroke-linejoin="round"/><path d="M5.500 2l2.500 2.500h-1.500v4h-1" fill="#7ce87c" opacity="0.700"/></svg><span class="a ss" style="left:20px;top:165px;">EURJPY</span><span class="a ss" style="left:82px;width:54px;text-align:right;top:165px;color:#0000f0;-webkit-text-stroke:0">135.92</span><span class="a ss" style="left:139px;width:54px;text-align:right;top:165px;color:#0000f0;-webkit-text-stroke:0">135.96</span><div style="left:0;top:200px;width:198px;height:1px;background:#c4c2ba;"></div><svg class="a" style="left:4px;top:185px" width="11" height="10" viewBox="0 0 11 10"><path d="M5.500 0.500l5 5h-3v4h-4v-4h-3z" fill="#30c030" stroke="#108418" stroke-width="0.900" stroke-linejoin="round"/><path d="M5.500 2l2.500 2.500h-1.500v4h-1" fill="#7ce87c" opacity="0.700"/></svg><span class="a ss" style="left:20px;top:185px;">GBPJPY</span><span class="a ss" style="left:82px;width:54px;text-align:right;top:185px;color:#0000f0;-webkit-text-stroke:0">200.45</span><span class="a ss" style="left:139px;width:54px;text-align:right;top:185px;color:#0000f0;-webkit-text-stroke:0">200.53</span><div style="left:81px;top:0;width:1px;height:200px;background:#c4c2ba;"></div><div style="left:138px;top:0;width:1px;height:200px;background:#c4c2ba;"></div><div style="left:196px;top:0;width:1px;height:200px;background:#c4c2ba;"></div></div><div style="left:202px;top:118px;width:15px;height:214px;background:#f4f3f0;"></div><div style="left:203px;top:119px;width:14px;height:15px;border-radius:2px;background:linear-gradient(90deg,#ccd8fa,#bccaf6);border:1px solid #dce4fc;"></div><svg class="a" style="left:206px;top:122px" width="9" height="7" viewBox="0 0 9 7" ><path d="M1 5.500l3.500-3.500l3.500 3.500" stroke="#4a6088" stroke-width="1.800" fill="none"/></svg><div style="left:203px;top:136px;width:14px;height:62px;border-radius:2px;background:linear-gradient(90deg,#ccd8fa,#bccaf6);border:1px solid #dce4fc;"></div><div style="left:206px;top:163px;width:7px;height:1px;background:#eef2ff;"></div><div style="left:206px;top:165px;width:7px;height:1px;background:#eef2ff;"></div><div style="left:206px;top:167px;width:7px;height:1px;background:#eef2ff;"></div><div style="left:206px;top:169px;width:7px;height:1px;background:#eef2ff;"></div><div style="left:203px;top:316px;width:14px;height:15px;border-radius:2px;background:linear-gradient(90deg,#ccd8fa,#bccaf6);border:1px solid #dce4fc;"></div><svg class="a" style="left:206px;top:320px" width="9" height="7" viewBox="0 0 9 7" ><path d="M1 1.500l3.500 3.500l3.500-3.500" stroke="#4a6088" stroke-width="1.800" fill="none"/></svg><div style="left:4px;top:332px;width:214px;height:1px;background:#000;"></div><div style="left:6px;top:332px;width:44px;height:18px;background:#fcfcfa;border:1px solid #000;border-top:0;border-right-width:2px;border-bottom-width:2px;"></div><span class="a" style="left:16px;top:334.5px;line-height:12px;"><span class="cj" style="font-size:12px">商品</span></span><span class="a" style="left:60px;top:334.5px;line-height:12px;color:#9a9a98;"><span class="cj" style="font-size:12px">线图</span></span><div style="left:94px;top:336px;width:1px;height:12px;background:#8c8c8a;"></div><div style="left:3px;top:352px;width:216px;height:1px;background:#fdfdfc;"></div><div style="left:0;top:354px;width:222px;height:1px;background:#c8c8c6;"></div><div style="left:0;top:355px;width:222px;height:1px;background:#fbfbfa;"></div><div style="left:3px;top:358px;width:202px;height:13px;background:#6d9bd8;"></div><span class="a" style="left:5px;top:358px;color:#fff;line-height:13px;"><span class="cj" style="font-size:12px">导航</span></span><svg class="a" style="left:209px;top:361px" width="7" height="6" viewBox="0 0 7 6" ><path d="M0.500 0.500l6 5M6.500 0.500l-6 5" stroke="#000" stroke-width="1.700"/></svg><div style="left:3px;top:372px;width:215px;height:163px;border:1px solid #a8a8a4;border-bottom:0;background:#fbfdf9;"></div><div style="left:17px;top:391px;width:1px;height:97px;background:repeating-linear-gradient(180deg,#a0a0a0 0,#a0a0a0 1px,transparent 1px,transparent 2px);"></div><div style="left:38px;top:409px;width:1px;height:11px;background:repeating-linear-gradient(180deg,#a0a0a0 0,#a0a0a0 1px,transparent 1px,transparent 2px);"></div><div style="left:38px;top:420px;width:11px;height:1px;background:repeating-linear-gradient(90deg,#a0a0a0 0,#a0a0a0 1px,transparent 1px,transparent 2px);"></div><div style="left:22px;top:402px;width:7px;height:1px;background:repeating-linear-gradient(90deg,#a0a0a0 0,#a0a0a0 1px,transparent 1px,transparent 2px);"></div><div style="left:22px;top:438px;width:7px;height:1px;background:repeating-linear-gradient(90deg,#a0a0a0 0,#a0a0a0 1px,transparent 1px,transparent 2px);"></div><div style="left:22px;top:456px;width:7px;height:1px;background:repeating-linear-gradient(90deg,#a0a0a0 0,#a0a0a0 1px,transparent 1px,transparent 2px);"></div><div style="left:22px;top:474px;width:7px;height:1px;background:repeating-linear-gradient(90deg,#a0a0a0 0,#a0a0a0 1px,transparent 1px,transparent 2px);"></div><div style="left:22px;top:492px;width:7px;height:1px;background:repeating-linear-gradient(90deg,#a0a0a0 0,#a0a0a0 1px,transparent 1px,transparent 2px);"></div><div style="left:13px;top:398px;width:9px;height:9px;border:1px solid #8c9cb8;border-radius:1.500px;background:linear-gradient(135deg,#fff,#d8d4c8);"></div><div style="left:15px;top:402px;width:5px;height:1px;background:#000;"></div><div style="left:13px;top:434px;width:9px;height:9px;border:1px solid #8c9cb8;border-radius:1.500px;background:linear-gradient(135deg,#fff,#d8d4c8);"></div><div style="left:15px;top:438px;width:5px;height:1px;background:#000;"></div><div style="left:17px;top:436px;width:1px;height:5px;background:#000;"></div><div style="left:13px;top:452px;width:9px;height:9px;border:1px solid #8c9cb8;border-radius:1.500px;background:linear-gradient(135deg,#fff,#d8d4c8);"></div><div style="left:15px;top:456px;width:5px;height:1px;background:#000;"></div><div style="left:17px;top:454px;width:1px;height:5px;background:#000;"></div><div style="left:13px;top:470px;width:9px;height:9px;border:1px solid #8c9cb8;border-radius:1.500px;background:linear-gradient(135deg,#fff,#d8d4c8);"></div><div style="left:15px;top:474px;width:5px;height:1px;background:#000;"></div><div style="left:17px;top:472px;width:1px;height:5px;background:#000;"></div><div style="left:13px;top:488px;width:9px;height:9px;border:1px solid #8c9cb8;border-radius:1.500px;background:linear-gradient(135deg,#fff,#d8d4c8);"></div><div style="left:15px;top:492px;width:5px;height:1px;background:#000;"></div><div style="left:17px;top:490px;width:1px;height:5px;background:#000;"></div><svg class="a" style="left:10px;top:375px" width="15" height="15" viewBox="0 0 15 15" ><rect x="0.500" y="0.500" width="10" height="8" rx="1.200" fill="#fff" stroke="#58a0e0"/><rect x="1" y="1" width="9" height="2" fill="#78b4ec"/>
<rect x="3.500" y="5.500" width="11" height="9" rx="1.200" fill="#fff" stroke="#4894dc"/><rect x="4" y="6" width="10" height="2" fill="#68a8e8"/>
<path d="M5.500 11l1.200-1.500l1.300 3l1.500-3l1.300 3l1.200-1.500" fill="none" stroke="#4080c8" stroke-width="0.900"/><path d="M2 5h1.500M4.500 5h1.500" stroke="#58a0e0" stroke-width="0.800"/></svg><svg class="a" style="left:29px;top:392px" width="18" height="17" viewBox="0 0 18 17" ><circle cx="5.500" cy="4.500" r="3.300" fill="#e8b030" stroke="#b88a18" stroke-width="0.800"/><path d="M0.500 15c0-7 9-7 9 0z" fill="#38c038" stroke="#1c8c24" stroke-width="0.800"/><circle cx="11.500" cy="5.500" r="3.500" fill="#f0c040" stroke="#b88a18" stroke-width="0.800"/><path d="M5.500 16.500c0-8 12-8 12 0z" fill="#e8c038" stroke="#a88414" stroke-width="0.800"/><path d="M10.500 10l2 5l1-5z" fill="#f8f0c8"/></svg><svg class="a" style="left:53px;top:411px" width="13" height="16" viewBox="0 0 13 16" ><circle cx="6.500" cy="4.500" r="3.800" fill="#f0c040" stroke="#b88a18" stroke-width="0.800"/><path d="M3 3c1-3 6-3 7 0c-2-1-5-1-7 0z" fill="#d89820"/><path d="M0.500 15.500c0-8.500 12-8.500 12 0z" fill="#38c838" stroke="#1c8c24" stroke-width="0.800"/><path d="M5.500 9l2.500 6l1-6z" fill="#f4f4e8"/></svg><svg class="a" style="left:31px;top:430px" width="15" height="15" viewBox="0 0 15 15" ><rect x="0.500" y="0.500" width="13" height="13" rx="2.500" fill="#f4d860" stroke="#c09a20"/><rect x="1.500" y="1.500" width="11" height="5" rx="2" fill="#fcf0a8" opacity="0.800"/><text x="4.500" y="11" font-family="Liberation Serif" font-style="italic" font-weight="bold" font-size="11" fill="#8a6a14">f</text></svg><svg class="a" style="left:30px;top:446px" width="17" height="17" viewBox="0 0 17 17" ><path d="M4 8l2 5h5l2-5z" fill="#f0d450" stroke="#b8941c" stroke-width="0.800"/><ellipse cx="8" cy="6" rx="7.500" ry="3" fill="#58a8e4" stroke="#2c78c0" stroke-width="0.800"/><path d="M4 5c0-4.500 8-4.500 8 0z" fill="#70b8f0" stroke="#2c78c0" stroke-width="0.800"/><path d="M12.5 9.500l3 3l-3 3l-3-3z" fill="#f0d048" stroke="#a8841c" stroke-width="0.800"/></svg><svg class="a" style="left:31px;top:465px" width="16" height="16" viewBox="0 0 16 16" ><rect x="0.500" y="0.500" width="13" height="13" rx="2.500" fill="#f4d860" stroke="#c09a20"/><rect x="1.500" y="1.500" width="11" height="5" rx="2" fill="#fcf0a8" opacity="0.800"/><text x="4.500" y="11" font-family="Liberation Serif" font-style="italic" font-weight="bold" font-size="11" fill="#8a6a14">f</text><path d="M12 9l3 3l-3 3l-3-3z" fill="#f0d048" stroke="#a8841c" stroke-width="0.800"/></svg><svg class="a" style="left:32px;top:483px" width="15" height="16" viewBox="0 0 15 16" ><path d="M1.500 0.500h9c2 0 2 2.500 0 2.500h-1v7h1c2 0 2 2.500 0 2.500h-9c-2 0-2-2.500 0-2.500h1v-7h-1c-2 0-2-2.500 0-2.500z" fill="#f8e080" stroke="#c8a028" stroke-width="0.800"/><path d="M4.500 5h1M6.500 5h1M4.500 7h1M6.500 7h1" stroke="#b08a20" stroke-width="0.900"/><path d="M11.5 9.500l3 3l-3 3l-3-3z" fill="#f0d048" stroke="#a8841c" stroke-width="0.800"/></svg><span class="a ss" style="left:31px;top:377px;">MetaTrader</span><span class="a" style="left:51px;top:395px;line-height:12px;"><span class="cj" style="font-size:12px">账户</span></span><span class="a ss" style="left:73px;top:413px;">158999: CJR Sempron</span><span class="a" style="left:52px;top:431px;line-height:12px;"><span class="cj" style="font-size:12px">技术指标</span></span><span class="a" style="left:52px;top:449px;line-height:12px;"><span class="cj" style="font-size:12px">智能交易系统</span></span><span class="a" style="left:52px;top:467px;line-height:12px;"><span class="cj" style="font-size:12px">自定义指标</span></span><span class="a" style="left:52px;top:485px;line-height:12px;"><span class="cj" style="font-size:12px">脚本</span></span><div style="left:4px;top:534px;width:214px;height:1px;background:#000;"></div><div style="left:6px;top:534px;width:44px;height:18px;background:#fcfcfa;border:1px solid #000;border-top:0;border-right-width:2px;border-bottom-width:2px;"></div><span class="a" style="left:16px;top:536.5px;line-height:12px;"><span class="cj" style="font-size:12px">常规</span></span><span class="a" style="left:60px;top:536.5px;line-height:12px;color:#9a9a98;"><span class="cj" style="font-size:12px">收藏夹</span></span><div style="left:106px;top:538px;width:1px;height:12px;background:#8c8c8a;"></div><div style="left:3px;top:554px;width:216px;height:1px;background:#fdfdfc;"></div><div style="left:0;top:557px;width:1024px;height:1px;background:#c8c8c6;"></div><div style="left:0;top:558px;width:1024px;height:1px;background:#fbfbfa;"></div><div style="left:224px;top:101px;width:800px;height:1px;background:#9c9c9a;"></div><div style="left:224px;top:102px;width:798px;height:434px;background:#020002;"></div><div style="left:1022px;top:102px;width:2px;height:436px;background:#f4f4f2;"></div><div style="left:224px;top:536px;width:800px;height:2px;background:#fafaf8;"></div><svg class="a" style="left:0;top:0" width="1024" height="768" viewBox="0 0 1024 768" shape-rendering="crispEdges"><path d="M259.5 104V517M291.5 104V517M323.5 104V517M355.5 104V517M387.5 104V517M419.5 104V517M451.5 104V517M483.5 104V517M515.5 104V517M547.5 104V517M579.5 104V517M611.5 104V517M643.5 104V517M675.5 104V517M707.5 104V517M739.5 104V517M771.5 104V517M803.5 104V517M835.5 104V517M867.5 104V517M899.5 104V517M931.5 104V517M963.5 104V517" stroke="#788a9c" stroke-width="1" stroke-dasharray="3 3" stroke-dashoffset="0" fill="none"/><path d="M228 134.500H982M228 169.500H982M228 204.500H982M228 239.500H982M228 274.500H982M228 306.500H982M228 340.500H982M228 375.500H982M228 410.500H982M228 445.500H982M228 480.500H982M228 515.500H982" stroke="#788a9c" stroke-width="1" stroke-dasharray="3 3" fill="none"/><rect x="229" y="107" width="184" height="11" fill="#020002"/><path d="M226.5 104V518M226 104.500H983M982.500 104V518M226 517.500H983" stroke="#fff" stroke-width="1" fill="none"/><path d="M227 467.500H982" stroke="#8797a9" stroke-width="1"/><path d="M228 435.500H982M228 441.500H982" stroke="#2fd22f" stroke-width="1" stroke-dasharray="9 6 3 6" fill="none"/><path d="M983 134.500H985M983 169.500H985M983 204.500H985M983 239.500H985M983 274.500H985M983 306.500H985M983 340.500H985M983 375.500H985M983 410.500H985M983 445.500H985M983 480.500H985M983 515.500H985M227.500 518V522M291.500 518V522M355.500 518V522M419.500 518V522M483.500 518V522M547.500 518V522M611.500 518V522M675.500 518V522M739.500 518V522M803.500 518V522M867.500 518V522M931.500 518V522" stroke="#fff" stroke-width="1"/></svg><span class="a c9" style="left:233px;top:424.500px;">#1979402 sell</span><div style="left:231px;top:430px;width:60px;height:10px;background:#020002;"></div><span class="a c9" style="left:232px;top:430.500px;">#1979637 sell</span><svg class="a" style="left:0;top:0" width="1024" height="768" viewBox="0 0 1024 768" shape-rendering="crispEdges"><path d="M227.5 437V471M229.500 447V461M231.500 443V460M233.500 455V468M235.500 444V460M237.500 450V457M239.500 444V461M241.500 453V461M243.500 450V465M245.500 451V464M247.500 462V469M249.500 464V470M251.500 456V471M253.500 457V465M255.500 455V468M257.500 436V473M259.500 413V451M261.500 418V433M263.500 388V423M265.500 391V407M267.500 360V394M269.500 362V381M271.500 271V364M273.500 266V285M275.500 268V287M277.500 249V279M279.500 224V254M281.500 240V252M283.500 235V250M285.500 228V241M287.500 242V259M289.500 247V257M291.500 254V264M293.500 247V255M295.500 249V259M297.500 254V264M299.500 246V260M301.500 243V252M303.500 221V247M305.500 203V239M307.500 189V216M309.500 193V231M311.500 208V225M313.500 183V232M315.500 181V245M317.500 210V252M319.500 187V239M321.500 184V215M323.500 172V198M325.500 174V188M327.500 163V181M329.500 168V179M331.500 168V186M333.500 193V204M335.500 199V218M337.500 200V211M339.500 152V201M341.500 136V154M343.500 137V150M345.500 128V148M347.500 142V155M349.500 136V164M351.500 143V159M353.500 131V154M355.500 133V145M357.500 129V142M359.500 136V144M361.500 134V148M363.500 137V154M365.500 152V173M367.500 169V188M369.500 172V183M371.500 166V183M373.500 169V179M375.500 168V179M377.500 161V169M379.500 165V174M381.500 170V184M383.500 181V194M385.500 177V201M387.500 182V197M389.500 178V185M391.500 181V195M393.500 190V203M395.500 184V200M397.500 181V207M399.500 190V216M401.500 178V218M403.500 182V195M405.500 163V191M407.500 161V178M409.500 153V170M411.500 150V175M413.500 156V191M415.500 174V197M417.500 170V185M419.500 168V186M421.500 166V178M423.500 171V181M425.500 175V183M427.500 178V191M429.500 186V197M431.500 180V197M433.500 193V216M435.500 191V210M437.500 206V219M439.500 200V225M441.500 199V211M443.500 198V211M445.500 173V208M447.500 154V176M449.500 162V197M451.500 170V199M453.500 175V206M455.500 189V207M457.500 182V208M459.500 185V226M461.500 191V219M463.500 193V213M465.500 181V200M467.500 189V218M469.500 212V231M471.500 218V227M473.500 217V223M475.500 219V228M477.500 217V226M479.500 209V226M481.500 214V241M483.500 224V247M485.500 215V234M487.500 214V222M489.500 215V223M491.500 219V226M493.500 203V226M495.500 202V222M497.500 205V225M499.500 210V223M501.500 207V226M503.500 214V228M505.500 175V226M507.500 168V185M509.500 180V211M511.500 189V214M513.500 194V222M515.500 214V239M517.500 225V242M519.500 221V231M521.500 225V234M523.500 226V231M525.500 222V229M527.500 210V228M529.500 211V243M531.500 214V239M533.500 197V214M535.500 202V215M537.500 207V222M539.500 202V216M541.500 200V211M543.500 206V238M545.500 210V232M547.500 205V241M549.500 225V248M551.500 219V254M553.500 190V226M555.500 191V213M557.500 182V211M559.500 180V210M561.500 196V211M563.500 196V210M565.500 196V208M567.500 200V211M569.500 196V206M571.500 184V191M573.500 177V191M575.500 177V197M577.500 187V197M579.500 191V237M581.500 222V242M583.500 224V234M585.500 226V238M587.500 226V259M589.500 256V296M591.500 269V296M593.500 266V280M595.500 268V292M597.500 281V294M599.500 283V319M601.500 303V320M603.500 298V328M605.500 303V323M607.500 311V343M609.500 328V344M611.500 334V343M613.500 332V345M615.500 335V348M617.500 338V347M619.500 330V342M621.500 321V338M623.500 324V345M625.500 315V344M627.500 318V336M629.500 322V331M631.500 315V329M633.500 314V331M635.500 321V351M637.500 322V348M639.500 310V338M641.500 315V340M643.500 314V341M645.500 307V326M647.500 300V344M649.500 302V333M651.500 310V326M653.500 314V333M655.500 316V329M657.500 318V329M659.500 316V327M661.500 312V322M663.500 316V322M665.500 316V327M667.500 316V326M669.500 310V324M671.500 311V316M673.500 281V313M675.500 286V299M677.500 284V295M679.500 287V294M681.500 279V292M683.500 288V310M685.500 290V315M687.500 294V317M689.500 307V326M691.500 299V320M693.500 282V317M695.500 270V299M697.500 274V297M699.500 265V288M701.500 286V313M703.500 293V308M705.500 302V312M707.500 307V321M709.500 312V322M711.500 305V312M713.500 306V320M715.500 309V322M717.500 312V323M719.500 315V324M721.500 316V344M723.500 335V364M725.500 349V360M727.500 340V364M729.500 339V352M731.500 337V372M733.500 356V382M735.500 356V407M737.500 399V423M739.500 409V421M741.500 411V428M743.500 406V435M745.500 423V446M747.500 422V451M749.500 430V451M751.500 420V446M753.500 424V441M755.500 434V446M757.500 431V446M759.500 434V446M761.500 431V438M763.500 425V436M765.500 423V432M767.500 425V432M769.500 425V435M771.500 416V433M773.500 415V421M775.500 374V416M777.500 376V396M779.500 386V405M781.500 391V404M783.500 393V412M785.500 395V414M787.500 383V409M789.500 399V409M791.500 400V424M793.500 418V456M795.500 443V466M797.500 440V460M799.500 444V457M801.500 437V456M803.500 416V442M805.500 418V421M807.500 416V426M809.500 379V475M811.500 457V472M813.500 448V461M815.500 440V456M817.500 443V449M819.500 443V448M821.500 444V463M823.500 444V475M825.500 474V497M827.500 464V498M829.500 451V486M831.500 452V475M833.500 451V467M835.500 431V463M837.500 436V465M839.500 436V465M841.500 435V451M843.500 434V452M845.500 444V466M847.500 460V472M849.500 448V468M851.500 443V454M853.500 443V465M855.500 456V467M857.500 457V468M859.500 451V462M861.500 451V472M863.500 453V472M865.500 443V458M867.500 444V454M869.500 441V449M871.500 444V463M873.500 419V461M875.500 430V450M877.500 430V451M879.500 435V465M881.500 435V464M883.500 432V445M885.500 435V457M887.500 434V457M889.500 434V449M891.500 438V454M893.500 438V457M895.500 445V457M897.500 444V489M899.500 476V492M901.500 476V492M903.500 480V492M905.500 482V498M907.500 493V507M909.500 484V507M911.500 480V493M913.500 464V488M915.500 457V485M917.500 443V468M919.500 418V453M921.500 411V447M923.500 416V451M925.500 394V447M927.500 395V431M929.500 400V425M931.500 386V415M933.500 387V404M935.500 395V407M937.500 387V410M939.500 387V420M941.500 408V428M943.500 404V421M945.500 400V423M947.500 411V420M949.500 407V417M951.500 395V414M953.500 394V407M955.500 382V405M957.500 374V394M959.500 386V431M961.500 420V436M963.500 422V431M965.500 424V437M967.500 409V435M969.500 407V426M971.500 400V420M973.500 396V428M975.500 422V462M977.500 455V476" stroke="#00fc00" stroke-width="1" fill="none"/></svg><span class="a c9" style="left:231px;top:107.500px;">GBPUSD,H1&nbsp; 1.8026 1.8030 1.8001 1.8012</span><span class="a c9" style="left:988px;top:128.8px;">1.8490</span><span class="a c9" style="left:988px;top:163.8px;">1.8440</span><span class="a c9" style="left:988px;top:198.8px;">1.8390</span><span class="a c9" style="left:988px;top:233.8px;">1.8340</span><span class="a c9" style="left:988px;top:268.8px;">1.8290</span><span class="a c9" style="left:988px;top:300.8px;">1.8245</span><span class="a c9" style="left:988px;top:334.8px;">1.8195</span><span class="a c9" style="left:988px;top:369.8px;">1.8145</span><span class="a c9" style="left:988px;top:404.8px;">1.8095</span><span class="a c9" style="left:988px;top:439.8px;">1.8045</span><span class="a c9" style="left:988px;top:474.8px;">1.7995</span><span class="a c9" style="left:988px;top:509.8px;">1.7945</span><div style="left:985px;top:461px;width:34px;height:11px;background:#fff;"></div><span class="a c9" style="left:988px;top:462.500px;color:#000;">1.8012</span><span class="a c9" style="left:226px;top:523px;">31 Aug 2005</span><span class="a c9" style="left:290px;top:523px;">2 Sep 02:00</span><span class="a c9" style="left:354px;top:523px;">5 Sep 11:00</span><span class="a c9" style="left:418px;top:523px;">6 Sep 19:00</span><span class="a c9" style="left:482px;top:523px;">8 Sep 03:00</span><span class="a c9" style="left:546px;top:523px;">9 Sep 11:00</span><span class="a c9" style="left:610px;top:523px;">12 Sep 20:00</span><span class="a c9" style="left:674px;top:523px;">14 Sep 04:00</span><span class="a c9" style="left:738px;top:523px;">15 Sep 12:00</span><span class="a c9" style="left:802px;top:523px;">16 Sep 20:00</span><span class="a c9" style="left:866px;top:523px;">20 Sep 05:00</span><span class="a c9" style="left:930px;top:523px;">21 Sep 13:00</span><div style="left:224px;top:538px;width:800px;height:1px;background:#1c1c1c;"></div><div style="left:224px;top:539px;width:800px;height:18px;background:#ecebe8;"></div><div style="left:223px;top:539px;width:1px;height:18px;background:#a8a8a6;"></div><span class="a th" style="left:236.4px;top:541px;color:#8a8a92;line-height:13px;">EURUSD,H4</span><span class="a th" style="left:317.7px;top:541px;color:#8a8a92;line-height:13px;">GBPUSD,H4</span><span class="a th" style="left:396.6px;top:541px;color:#8a8a92;line-height:13px;">EURUSD,M1</span><span class="a th" style="left:475.9px;top:541px;color:#8a8a92;line-height:13px;">EURGBP,M5</span><span class="a th" style="left:556.7px;top:541px;color:#8a8a92;line-height:13px;">GBPUSD,H1</span><span class="a th" style="left:635.8px;top:541px;color:#8a8a92;line-height:13px;">EURJPY,M1</span><span class="a th" style="left:713.9px;top:541px;color:#8a8a92;line-height:13px;">GBPUSD,H4</span><span class="a th" style="left:792.4px;top:541px;color:#8a8a92;line-height:13px;">GBPUSD,M30</span><span class="a th" style="left:877.2px;top:541px;color:#8a8a92;line-height:13px;">GBPUSD,H4</span><div style="left:957px;top:541px;width:31px;height:14px;overflow:hidden;"><span class="a th" style="left:0;top:0;color:#8a8a92;line-height:13px;">GBPUSD</span></div><div style="left:306px;top:542px;width:1px;height:12px;background:#7c7c84;"></div><div style="left:387px;top:542px;width:1px;height:12px;background:#7c7c84;"></div><div style="left:466.5px;top:542px;width:1px;height:12px;background:#7c7c84;"></div><div style="left:547px;top:542px;width:1px;height:12px;background:#7c7c84;"></div><div style="left:627px;top:542px;width:1px;height:12px;background:#7c7c84;"></div><div style="left:702px;top:542px;width:1px;height:12px;background:#7c7c84;"></div><div style="left:782px;top:542px;width:1px;height:12px;background:#7c7c84;"></div><div style="left:866px;top:542px;width:1px;height:12px;background:#7c7c84;"></div><div style="left:946px;top:542px;width:1px;height:12px;background:#7c7c84;"></div><svg class="a" style="left:995px;top:543px" width="5" height="9"><path d="M4.5 0.500v8l-4-4z" fill="#a0a0a0"/></svg><svg class="a" style="left:1012px;top:543px" width="5" height="9"><path d="M0.500 0.500v8l4-4z" fill="#000"/></svg><div style="left:0;top:559px;width:1024px;height:158px;background:#ecebe8;"></div><svg class="a" style="left:4px;top:565px" width="7" height="6" viewBox="0 0 7 6" ><path d="M0.500 0.500l6 5M6.500 0.500l-6 5" stroke="#000" stroke-width="1.700"/></svg><div style="left:1px;top:576px;width:12px;height:138px;background:linear-gradient(#5c98e0,#4a80d0 60%,#3c6cc0);"></div><span class="a" style="left:1px;top:687px;width:12px;height:26px;color:#fff;"><span style="position:absolute;left:0;top:26px;transform-origin:0 0;transform:rotate(-90deg);line-height:12px;display:block;white-space:nowrap"><span class="cj" style="font-size:12px">终端</span></span></span><div style="left:15px;top:562px;width:1006px;height:132px;border:1px solid #a8a8a4;border-bottom:0;background:#fbfdf9;"></div><div style="left:16px;top:563px;width:1004px;height:20px;background:linear-gradient(#ecebe8 0,#ecebe8 15px,#e0dfd8 17px,#cfccc4 19px,#c4c1b8 20px);"></div><div style="left:114px;top:566px;width:1px;height:13px;background:#c8c6be;"></div><div style="left:115px;top:566px;width:1px;height:13px;background:#fff;"></div><div style="left:283px;top:566px;width:1px;height:13px;background:#c8c6be;"></div><div style="left:284px;top:566px;width:1px;height:13px;background:#fff;"></div><div style="left:352px;top:566px;width:1px;height:13px;background:#c8c6be;"></div><div style="left:353px;top:566px;width:1px;height:13px;background:#fff;"></div><div style="left:406px;top:566px;width:1px;height:13px;background:#c8c6be;"></div><div style="left:407px;top:566px;width:1px;height:13px;background:#fff;"></div><div style="left:475px;top:566px;width:1px;height:13px;background:#c8c6be;"></div><div style="left:476px;top:566px;width:1px;height:13px;background:#fff;"></div><div style="left:552px;top:566px;width:1px;height:13px;background:#c8c6be;"></div><div style="left:553px;top:566px;width:1px;height:13px;background:#fff;"></div><div style="left:629px;top:566px;width:1px;height:13px;background:#c8c6be;"></div><div style="left:630px;top:566px;width:1px;height:13px;background:#fff;"></div><div style="left:707px;top:566px;width:1px;height:13px;background:#c8c6be;"></div><div style="left:708px;top:566px;width:1px;height:13px;background:#fff;"></div><div style="left:783px;top:566px;width:1px;height:13px;background:#c8c6be;"></div><div style="left:784px;top:566px;width:1px;height:13px;background:#fff;"></div><div style="left:860px;top:566px;width:1px;height:13px;background:#c8c6be;"></div><div style="left:861px;top:566px;width:1px;height:13px;background:#fff;"></div><div style="left:938px;top:566px;width:1px;height:13px;background:#c8c6be;"></div><div style="left:939px;top:566px;width:1px;height:13px;background:#fff;"></div><div style="left:1017px;top:566px;width:1px;height:13px;background:#c8c6be;"></div><div style="left:1018px;top:566px;width:1px;height:13px;background:#fff;"></div><span class="a" style="left:25px;top:567px;line-height:11px;"><span class="cj" style="font-size:11px;-webkit-text-stroke:0.25px currentColor">定单号</span></span><span class="a" style="left:257px;top:567px;line-height:11px;"><span class="cj" style="font-size:11px;-webkit-text-stroke:0.25px currentColor">时间</span></span><span class="a" style="left:326px;top:567px;line-height:11px;"><span class="cj" style="font-size:11px;-webkit-text-stroke:0.25px currentColor">类型</span></span><span class="a" style="left:380px;top:567px;line-height:11px;"><span class="cj" style="font-size:11px;-webkit-text-stroke:0.25px currentColor">手数</span></span><span class="a" style="left:449px;top:567px;line-height:11px;"><span class="cj" style="font-size:11px;-webkit-text-stroke:0.25px currentColor">商品</span></span><span class="a" style="left:526px;top:567px;line-height:11px;"><span class="cj" style="font-size:11px;-webkit-text-stroke:0.25px currentColor">价位</span></span><span class="a" style="left:603px;top:567px;line-height:11px;"><span class="cj" style="font-size:11px;-webkit-text-stroke:0.25px currentColor">止损</span></span><span class="a" style="left:681px;top:567px;line-height:11px;"><span class="cj" style="font-size:11px;-webkit-text-stroke:0.25px currentColor">获利</span></span><span class="a" style="left:757px;top:567px;line-height:11px;"><span class="cj" style="font-size:11px;-webkit-text-stroke:0.25px currentColor">价位</span></span><span class="a" style="left:834px;top:567px;line-height:11px;"><span class="cj" style="font-size:11px;-webkit-text-stroke:0.25px currentColor">佣金</span></span><span class="a" style="left:912px;top:567px;line-height:11px;"><span class="cj" style="font-size:11px;-webkit-text-stroke:0.25px currentColor">利息</span></span><span class="a" style="left:991px;top:567px;line-height:11px;"><span class="cj" style="font-size:11px;-webkit-text-stroke:0.25px currentColor">获利</span></span><div style="left:16px;top:583px;width:1004px;height:20px;background:#fcfefa;"></div><div style="left:16px;top:603px;width:1004px;height:1px;background:#c8c8cc;"></div><div style="left:16px;top:604px;width:1004px;height:19px;background:#ececea;"></div><div style="left:16px;top:623px;width:1004px;height:20px;background:#c6c6c4;"></div><div style="left:114px;top:583px;width:1px;height:40px;background:#c8c8cc;"></div><div style="left:283px;top:583px;width:1px;height:40px;background:#c8c8cc;"></div><div style="left:352px;top:583px;width:1px;height:40px;background:#c8c8cc;"></div><div style="left:406px;top:583px;width:1px;height:40px;background:#c8c8cc;"></div><div style="left:475px;top:583px;width:1px;height:40px;background:#c8c8cc;"></div><div style="left:552px;top:583px;width:1px;height:40px;background:#c8c8cc;"></div><div style="left:629px;top:583px;width:1px;height:40px;background:#c8c8cc;"></div><div style="left:707px;top:583px;width:1px;height:40px;background:#c8c8cc;"></div><div style="left:783px;top:583px;width:1px;height:40px;background:#c8c8cc;"></div><div style="left:860px;top:583px;width:1px;height:40px;background:#c8c8cc;"></div><div style="left:938px;top:583px;width:1px;height:40px;background:#c8c8cc;"></div><svg class="a" style="left:19px;top:585px" width="14" height="15" viewBox="0 0 14 15" ><path d="M0.500 0.500h7l3 3v10h-10z" fill="#fafafa" stroke="#7c7c80"/><path d="M7.500 0.500v3h3" fill="#e4e4e4" stroke="#7c7c80" stroke-width="0.800"/><circle cx="10" cy="11" r="3.300" fill="#f04818" stroke="#b82c08" stroke-width="0.700"/><circle cx="9.200" cy="10" r="1.200" fill="#fc9068"/></svg><span class="a ss" style="left:41px;top:588px;">1979402</span><span class="a ss" style="left:180px;width:100px;text-align:right;top:588px;">2005.09.22&nbsp;11:10</span><span class="a ss" style="left:249px;width:100px;text-align:right;top:588px;">sell</span><span class="a ss" style="left:303px;width:100px;text-align:right;top:588px;">8.00</span><span class="a ss" style="left:372px;width:100px;text-align:right;top:588px;">gbpusd</span><span class="a ss" style="left:449px;width:100px;text-align:right;top:588px;">1.8058</span><span class="a ss" style="left:526px;width:100px;text-align:right;top:588px;">0.0000</span><span class="a ss" style="left:604px;width:100px;text-align:right;top:588px;">0.0000</span><span class="a ss" style="left:680px;width:100px;text-align:right;top:588px;">1.8016</span><span class="a ss" style="left:757px;width:100px;text-align:right;top:588px;">0.00</span><span class="a ss" style="left:835px;width:100px;text-align:right;top:588px;">0.00</span><span class="a ss" style="left:914px;width:100px;text-align:right;top:588px;">3&nbsp;360.00</span><svg class="a" style="left:19px;top:605px" width="14" height="15" viewBox="0 0 14 15" ><path d="M0.500 0.500h7l3 3v10h-10z" fill="#fafafa" stroke="#7c7c80"/><path d="M7.500 0.500v3h3" fill="#e4e4e4" stroke="#7c7c80" stroke-width="0.800"/><circle cx="10" cy="11" r="3.300" fill="#f04818" stroke="#b82c08" stroke-width="0.700"/><circle cx="9.200" cy="10" r="1.200" fill="#fc9068"/></svg><span class="a ss" style="left:41px;top:608px;">1979637</span><span class="a ss" style="left:180px;width:100px;text-align:right;top:608px;">2005.09.22&nbsp;11:27</span><span class="a ss" style="left:249px;width:100px;text-align:right;top:608px;">sell</span><span class="a ss" style="left:303px;width:100px;text-align:right;top:608px;">3.00</span><span class="a ss" style="left:372px;width:100px;text-align:right;top:608px;">gbpusd</span><span class="a ss" style="left:449px;width:100px;text-align:right;top:608px;">1.8049</span><span class="a ss" style="left:526px;width:100px;text-align:right;top:608px;">0.0000</span><span class="a ss" style="left:604px;width:100px;text-align:right;top:608px;">0.0000</span><span class="a ss" style="left:680px;width:100px;text-align:right;top:608px;">1.8016</span><span class="a ss" style="left:757px;width:100px;text-align:right;top:608px;">0.00</span><span class="a ss" style="left:835px;width:100px;text-align:right;top:608px;">0.00</span><span class="a ss" style="left:914px;width:100px;text-align:right;top:608px;">990.00</span><svg class="a" style="left:19px;top:625px" width="11" height="13" viewBox="0 0 11 13" ><rect x="0.500" y="0.500" width="10" height="12" rx="1" fill="#fdfdfd" stroke="#8c8c8c"/><path d="M5.500 3l3.500 3.500h-2v3h-3v-3h-2z" fill="#28b428" stroke="#0c7c14" stroke-width="0.700"/></svg><span class="a" style="left:42px;top:627px;font-family:'Liberation Mono',monospace;font-weight:bold;font-size:11px;letter-spacing:0.4px;white-space:nowrap;line-height:12px;"><span class="cj" style="font-size:11px;letter-spacing:1px">余额</span>:&nbsp;27&nbsp;284.00&nbsp;&nbsp;<span class="cj" style="font-size:11px;letter-spacing:1px">净值</span>:&nbsp;31&nbsp;634.00&nbsp;&nbsp;<span class="cj" style="font-size:11px;letter-spacing:1px">已用保证金</span>:&nbsp;9&nbsp;930.55&nbsp;&nbsp;<span class="cj" style="font-size:11px;letter-spacing:1px">可用保证金</span>:&nbsp;21&nbsp;703.45&nbsp;&nbsp;<span class="cj" style="font-size:11px;letter-spacing:1px">保证金比例</span>:&nbsp;318.55%</span><span class="a" style="left:915px;width:101.400px;text-align:right;top:627px;font-family:'Liberation Mono',monospace;font-weight:bold;font-size:11px;letter-spacing:0.4px;white-space:nowrap;line-height:12px;">4&nbsp;350.00</span><div style="left:16px;top:693px;width:1005px;height:1px;background:#000;"></div><div style="left:18px;top:693px;width:44px;height:18px;background:#fcfcfa;border:1px solid #000;border-top:0;border-right-width:2px;border-bottom-width:2px;"></div><span class="a" style="left:28px;top:695.5px;line-height:12px;"><span class="cj" style="font-size:12px">交易</span></span><span class="a" style="left:72px;top:695.5px;line-height:12px;color:#9a9a98;"><span class="cj" style="font-size:12px">账户历史</span></span><span class="a" style="left:140px;top:695.5px;line-height:12px;color:#9a9a98;"><span class="cj" style="font-size:12px">新闻</span></span><span class="a" style="left:184px;top:695.5px;line-height:12px;color:#9a9a98;"><span class="cj" style="font-size:12px">警报</span></span><span class="a" style="left:228px;top:695.5px;line-height:12px;color:#9a9a98;"><span class="cj" style="font-size:12px">邮箱</span></span><span class="a" style="left:272px;top:695.5px;line-height:12px;color:#9a9a98;"><span class="cj" style="font-size:12px">智能交易系统</span></span><span class="a" style="left:364px;top:695.5px;line-height:12px;color:#9a9a98;"><span class="cj" style="font-size:12px">日志</span></span><div style="left:130px;top:697px;width:1px;height:12px;background:#8c8c8a;"></div><div style="left:174px;top:697px;width:1px;height:12px;background:#8c8c8a;"></div><div style="left:218px;top:697px;width:1px;height:12px;background:#8c8c8a;"></div><div style="left:262px;top:697px;width:1px;height:12px;background:#8c8c8a;"></div><div style="left:354px;top:697px;width:1px;height:12px;background:#8c8c8a;"></div><div style="left:398px;top:697px;width:1px;height:12px;background:#8c8c8a;"></div><div style="left:0;top:715px;width:1024px;height:1px;background:#c8c8c6;"></div><div style="left:0;top:716px;width:1024px;height:1px;background:#fbfbfa;"></div><div style="left:0;top:717px;width:1024px;height:21px;background:#ecebe8;"></div><span class="a" style="left:4px;top:723px;line-height:11px;font:11px 'Liberation Mono',monospace;letter-spacing:-0.6px;-webkit-text-stroke:0.3px #000;white-space:nowrap"><span class="cj" style="font-size:11px">寻求帮助</span>,<span class="cj" style="font-size:11px">请按</span>F1<span class="cj" style="font-size:11px">键</span></span><span class="a ss" style="left:174px;top:722px;-webkit-text-stroke:0.4px #000;">Default</span><div style="left:169px;top:720px;width:1px;height:16px;background:#a8a8a4;"></div><div style="left:170px;top:720px;width:1px;height:16px;background:#fff;"></div><div style="left:332px;top:720px;width:1px;height:16px;background:#a8a8a4;"></div><div style="left:333px;top:720px;width:1px;height:16px;background:#fff;"></div><div style="left:448px;top:720px;width:1px;height:16px;background:#a8a8a4;"></div><div style="left:449px;top:720px;width:1px;height:16px;background:#fff;"></div><div style="left:533px;top:720px;width:1px;height:16px;background:#a8a8a4;"></div><div style="left:534px;top:720px;width:1px;height:16px;background:#fff;"></div><div style="left:620px;top:720px;width:1px;height:16px;background:#a8a8a4;"></div><div style="left:621px;top:720px;width:1px;height:16px;background:#fff;"></div><div style="left:706px;top:720px;width:1px;height:16px;background:#a8a8a4;"></div><div style="left:707px;top:720px;width:1px;height:16px;background:#fff;"></div><div style="left:792px;top:720px;width:1px;height:16px;background:#a8a8a4;"></div><div style="left:793px;top:720px;width:1px;height:16px;background:#fff;"></div><div style="left:878px;top:720px;width:1px;height:16px;background:#a8a8a4;"></div><div style="left:879px;top:720px;width:1px;height:16px;background:#fff;"></div><svg class="a" style="left:884px;top:723px" width="24" height="11" viewBox="0 0 24 11" shape-rendering="crispEdges"><rect x="0" y="0" width="2" height="11" fill="#5c8c1c"/><rect x="0" y="10.0" width="2" height="1.0" fill="#b02018"/><rect x="3" y="0" width="2" height="11" fill="#5c8c1c"/><rect x="3" y="8.7" width="2" height="2.3" fill="#b02018"/><rect x="6" y="0" width="2" height="11" fill="#5c8c1c"/><rect x="6" y="7.4" width="2" height="3.6" fill="#b02018"/><rect x="9" y="0" width="2" height="11" fill="#5c8c1c"/><rect x="9" y="6.1" width="2" height="4.9" fill="#b02018"/><rect x="12" y="0" width="2" height="11" fill="#5c8c1c"/><rect x="12" y="4.8" width="2" height="6.2" fill="#b02018"/><rect x="15" y="0" width="2" height="11" fill="#5c8c1c"/><rect x="15" y="3.5" width="2" height="7.5" fill="#b02018"/><rect x="18" y="0" width="2" height="11" fill="#5c8c1c"/><rect x="18" y="2.2" width="2" height="8.8" fill="#b02018"/><rect x="21" y="0" width="2" height="11" fill="#5c8c1c"/><rect x="21" y="0.9" width="2" height="10.1" fill="#b02018"/></svg><span class="a ss" style="left:927px;top:722px;-webkit-text-stroke:0.3px #000;">22/0 kb</span><svg class="a" style="left:1008px;top:723px" width="14" height="14"><path d="M13 2L2 13M13 6L6 13M13 10L10 13" stroke="#a8a8a4" stroke-width="1.500"/><path d="M14 3L3 14M14 7L7 14M14 11L11 14" stroke="#fff" stroke-width="1"/></svg><div style="left:0;top:738px;width:1024px;height:30px;background:linear-gradient(#3a78e4 0,#3f86f0 2px,#2a68e2 5px,#2561dc 12px,#2259d4 24px,#1d4cc0 28px,#1a44b0 30px);"></div><div style="left:805px;top:738px;width:219px;height:30px;background:linear-gradient(#1a80d8 0,#28a0f4 2px,#1492ea 6px,#1290e8 22px,#0e7cd0 28px,#0c6cbc 30px);"></div><div style="left:804px;top:738px;width:1px;height:30px;background:#1848a0;"></div><div style="left:805px;top:739px;width:1px;height:28px;background:#3cb0f8;"></div><div style="left:-10px;top:738px;width:108px;height:30px;border-radius:0 10px 10px 0 / 0 13px 13px 0;background:linear-gradient(#2e7430 0,#4aa44c 2px,#3f9a42 5px,#38903b 12px,#358c38 20px,#2e8032 26px,#256a28 30px);box-shadow:inset -3px 0 4px #2a702c;"></div><svg class="a" style="left:10px;top:744px" width="20" height="18" viewBox="0 0 20 18" ><path d="M2 3.500c2.500-2 5-2 7.500-.5l-1.500 6c-2.500-1.500-5-1.500-7.500.5z" fill="#e8542c"/><path d="M10.500 3.500c2.500 1.500 5 1.500 7.500-.5l-1.500 6c-2.500 2-5 2-7.500.5z" fill="#6cc034"/>
<path d="M0.300 10.500c2.500-2 5-2 7.500-.5l-1.500 6c-2.500-1.500-5-1.500-7.500.5z" fill="#4c88e8" transform="translate(1.500 0)"/><path d="M8.800 11c2.500 1.500 5 1.500 7.500-.5l-1.500 6c-2.500 2-5 2-7.500.5z" fill="#f4c830"/></svg><span class="a" style="left:41px;top:744px;color:#fff;line-height:18px;text-shadow:1px 1px 1px #1c5c1c;"><span class="cj" style="display:inline-block;font-size:19px;font-weight:300;transform:skewX(-14deg)">开始</span></span><svg class="a" style="left:111px;top:745px" width="17" height="16" viewBox="0 0 17 16" ><rect width="17" height="16" fill="#0818a8"/><path d="M0 9h17v7h-17z" fill="#000"/><text x="4" y="7" font-family="Liberation Sans" font-weight="bold" font-size="7" fill="#20e0e0">N</text><text x="1" y="15" font-family="Liberation Sans" font-weight="bold" font-size="7" fill="#20e0e0">P</text><text x="9" y="15" font-family="Liberation Sans" font-weight="bold" font-size="7" fill="#20e0e0">C</text><path d="M8.500 2v5M3 9l5.500-2l5.500 2" stroke="#fff" stroke-width="1.200" fill="none"/><circle cx="8.500" cy="2" r="1.300" fill="#fff"/><circle cx="3" cy="9" r="1.300" fill="#fff"/><circle cx="14" cy="9" r="1.300" fill="#fff"/></svg><svg class="a" style="left:134px;top:745px" width="17" height="17" viewBox="0 0 17 17" ><rect x="0.500" y="0.500" width="16" height="16" rx="2.500" fill="#2c2c30" stroke="#55585c"/><path d="M4 2l2 4h5l2-4l0 8l-3 5h-3l-3-5z" fill="#e8e8e8"/><path d="M5.500 8l2 1.500l-2 .5zM11.500 8l-2 1.500l2 .5z" fill="#222"/></svg><svg class="a" style="left:157px;top:747px" width="17" height="13" viewBox="0 0 17 13" ><path d="M4.500 0l4 4l4-4l4.500 4.500l-4.500 4.500l-4 4l-4-4l-4.500-4.500z" fill="#e01818"/><path d="M4.500 2l2.500 2.500l-2.500 2.500l-2.500-2.500zM12.500 2l2.500 2.500l-2.500 2.500l-2.500-2.500zM8.500 6l2.500 2.500l-2.500 2.500l-2.500-2.500z" fill="#f85050"/><path d="M8.500 4l-4 4M8.500 4l4 4" stroke="#8c0c0c" stroke-width="0.800"/></svg><svg class="a" style="left:185px;top:745px" width="9" height="6" viewBox="0 0 9 6" ><path d="M0.500 0.500l2.500 2.500l-2.500 2.500M4.500 0.500l2.500 2.500l-2.500 2.500" stroke="#a8c8fc" stroke-width="1.300" fill="none"/></svg><div style="left:200px;top:741px;width:88px;height:24px;border-radius:3px;background:linear-gradient(#5a98f8 0,#3e82f0 3px,#3a7cec 18px,#3474e4 24px);box-shadow:inset 0 0 0 1px #4a8cf4, 1px 0 0 #1c50c0, -1px 0 0 #2a64d8;"></div><svg class="a" style="left:210px;top:746px" width="17" height="13" viewBox="0 0 17 13" ><path d="M4.500 0l4 4l4-4l4.500 4.500l-4.500 4.500l-4 4l-4-4l-4.500-4.500z" fill="#e01818"/><path d="M4.500 2.500l2 2l-2 2l-2-2zM12.500 2.500l2 2l-2 2l-2-2zM8.500 6.500l2 2l-2 2l-2-2z" fill="#fff" opacity="0.850"/></svg><span class="a th" style="left:230px;top:746px;color:#fff;line-height:14px;font-size:11px;">CJR20...</span><div style="left:290px;top:741px;width:87px;height:24px;border-radius:3px;background:linear-gradient(#5a98f8 0,#3e82f0 3px,#3a7cec 18px,#3474e4 24px);box-shadow:inset 0 0 0 1px #4a8cf4, 1px 0 0 #1c50c0, -1px 0 0 #2a64d8;"></div><svg class="a" style="left:298px;top:746px" width="20" height="13" viewBox="0 0 20 13" ><path d="M0 4l5 1l4-2l3 3l-4 6l-6-1z" fill="#1428c8"/><path d="M1 12l5-5l3 2l4-5l2 2l4-5" stroke="#e82020" stroke-width="1.300" fill="none"/></svg><span class="a th" style="left:319px;top:746px;color:#fff;line-height:14px;font-size:11px;">Advan...</span><div style="left:380px;top:741px;width:87px;height:24px;border-radius:3px;background:linear-gradient(#5a98f8 0,#3e82f0 3px,#3a7cec 18px,#3474e4 24px);box-shadow:inset 0 0 0 1px #4a8cf4, 1px 0 0 #1c50c0, -1px 0 0 #2a64d8;"></div><svg class="a" style="left:388px;top:744px" width="18" height="18" viewBox="0 0 18 18" ><circle cx="5" cy="6" r="4.500" fill="#2870d8"/><path d="M2 4c2-1 3 1 5 0M1.500 8c2 1 4-1 6 0" stroke="#38b838" stroke-width="1.600" fill="none"/><rect x="6.500" y="1.500" width="9" height="12" fill="#f4e068" stroke="#5c4c10"/><path d="M8.500 4h5M8.500 6.500h5M8.500 9h5" stroke="#5c4c10" stroke-width="1.200"/><path d="M11 13.500v2.500M4 16.500h13" stroke="#e8d020" stroke-width="1.600"/></svg><span class="a th" style="left:408px;top:746px;color:#fff;line-height:14px;font-size:11px;">Global...</span><div style="left:468px;top:741px;width:87px;height:24px;border-radius:3px;background:linear-gradient(#5a98f8 0,#3e82f0 3px,#3a7cec 18px,#3474e4 24px);box-shadow:inset 0 0 0 1px #4a8cf4, 1px 0 0 #1c50c0, -1px 0 0 #2a64d8;"></div><svg class="a" style="left:479px;top:745px" width="17" height="17" viewBox="0 0 17 17" ><path d="M3.500 0.500h8l3 3v13h-11z" fill="#fcfcfc" stroke="#888"/><path d="M1 10c2-7 9-8 11-3c-3-2-7-1-8 3z" fill="#2c70e0"/><circle cx="6.500" cy="8.500" r="3.500" fill="none" stroke="#2c70e0" stroke-width="1.800"/><path d="M0.500 7c4-5 10-5 12 0" stroke="#e8a020" stroke-width="1.200" fill="none"/></svg><span class="a th" style="left:498px;top:746px;color:#fff;line-height:14px;font-size:11px;"></span><span class="a" style="left:497px;top:746px;color:#fff;line-height:14px;white-space:nowrap;font-size:11px"><span class="cj" style="font-size:12px">外汇</span>...</span><div style="left:557px;top:741px;width:87px;height:24px;border-radius:3px;background:linear-gradient(#5a98f8 0,#3e82f0 3px,#3a7cec 18px,#3474e4 24px);box-shadow:inset 0 0 0 1px #4a8cf4, 1px 0 0 #1c50c0, -1px 0 0 #2a64d8;"></div><svg class="a" style="left:565px;top:745px" width="17" height="16" viewBox="0 0 17 16" ><rect x="0.500" y="0.500" width="10" height="8" rx="1.200" fill="#fff" stroke="#8cc0f0"/><rect x="1" y="1" width="9" height="2" fill="#8cc0f0"/><rect x="4.500" y="5.500" width="12" height="10" rx="1.200" fill="#fff" stroke="#6cb0ec"/><rect x="5" y="6" width="11" height="2.500" fill="#6cb0ec"/><path d="M6.500 12.500l1.500-2l1.500 3l1.500-3l1.500 3l1.500-2" fill="none" stroke="#4080c8" stroke-width="0.900"/></svg><span class="a th" style="left:586px;top:746px;color:#fff;line-height:14px;font-size:11px;">15899...</span><svg class="a" style="left:660px;top:746px" width="18" height="14" viewBox="0 0 18 14" ><rect x="0.500" y="3.500" width="17" height="10" rx="1.500" fill="#f4f4f0" stroke="#222"/><path d="M2.500 6h13M2.500 8.500h13M4 11h10" stroke="#222" stroke-width="1.200" stroke-dasharray="1.500 1"/><path d="M5 3.500c1-3 6-3 8-3" stroke="#222" fill="none"/></svg><svg class="a" style="left:682px;top:744px" width="13" height="17" viewBox="0 0 13 17" ><path d="M0.500 0.500h12v12.500h-4l-1 3l-1-3h-6z" fill="#f8ec90" stroke="#4c4c20"/><text x="3" y="10.500" font-family="Liberation Sans" font-weight="bold" font-size="11" fill="#202080">?</text></svg><svg class="a" style="left:704px;top:744px" width="9" height="16" viewBox="0 0 9 16" ><rect x="2.500" y="0.500" width="6" height="4" fill="none" stroke="#fff"/><rect x="0.500" y="3.500" width="6" height="4" fill="#2a62dc" stroke="#fff"/><path d="M0.500 11.500h6l-3 3z" fill="#fff"/></svg><span class="a" style="left:726px;top:747px;color:#a4c0f8;line-height:13px;"><span class="cj" style="font-size:12.5px">我的电脑</span></span><svg class="a" style="left:783px;top:745px" width="9" height="6" viewBox="0 0 9 6" ><path d="M0.500 0.500l2.500 2.500l-2.500 2.500M4.500 0.500l2.500 2.500l-2.500 2.500" stroke="#a8c8fc" stroke-width="1.300" fill="none"/></svg><svg class="a" style="left:798px;top:744px" width="18" height="18" viewBox="0 0 18 18" ><circle cx="9" cy="9" r="8" fill="#2c6ce0" stroke="#c8dcfc" stroke-width="1.200"/><circle cx="8" cy="7" r="5" fill="#5c98f4" opacity="0.600"/><path d="M10.500 5l-4 4l4 4" stroke="#fff" stroke-width="2" fill="none"/></svg><svg class="a" style="left:816px;top:746px" width="13" height="14" viewBox="0 0 13 14" ><path d="M1 5h3l4-4v12l-4-4h-3z" fill="#d8d8d0" stroke="#686860" stroke-width="0.800"/><path d="M10 4c1.500 2 1.500 4 0 6" stroke="#c8e0fc" fill="none"/></svg><svg class="a" style="left:834px;top:745px" width="17" height="15" viewBox="0 0 17 15" ><path d="M1 3h7l1 2h3l-1 8h-9z" fill="#f8e020" stroke="#302800" stroke-width="0.800"/><path d="M2 6h3v2h-3zM6 9h3v2h-3z" fill="#302800"/><path d="M11 1l1.500 3M15.500 2l-2 3M16.500 7h-3M15.500 12l-2-2" stroke="#fcf060" stroke-width="1.300"/></svg><svg class="a" style="left:850px;top:745px" width="17" height="16" viewBox="0 0 17 16" ><rect x="6.500" y="0.500" width="10" height="8" fill="#a8ccf8" stroke="#4c6ca8"/><rect x="8" y="2" width="7" height="5" fill="#d8ecfc"/><rect x="0.500" y="5.500" width="10" height="8" fill="#a8ccf8" stroke="#4c6ca8"/><rect x="2" y="7" width="7" height="5" fill="#e4f0fc"/><path d="M3 15h6M10 10.500h5" stroke="#88a8d8" stroke-width="1.500"/></svg><svg class="a" style="left:872px;top:746px" width="14" height="13" viewBox="0 0 14 13" ><rect x="0.500" y="0.500" width="13" height="12" fill="#082808" stroke="#0c3c0c"/><rect x="1.500" y="1.500" width="11" height="5" fill="#186418"/><rect x="1.500" y="7" width="11" height="5" fill="#38e038"/></svg><svg class="a" style="left:891px;top:746px" width="14" height="13" viewBox="0 0 14 13" ><rect x="0.500" y="0.500" width="13" height="12" fill="#282808" stroke="#3c3c0c"/><rect x="1.500" y="1.500" width="11" height="5" fill="#8c7c18" /><path d="M2 3h10M2 5h10" stroke="#403808" stroke-dasharray="1 1"/><rect x="1.500" y="7" width="11" height="5" fill="#f4e428"/></svg><svg class="a" style="left:909px;top:745px" width="13" height="16" viewBox="0 0 13 16" ><path d="M6.500 0.500l6 6h-12z" fill="#38c838" stroke="#187818" stroke-width="0.700"/><path d="M6.500 15.500l6-6h-12z" fill="#30b030" stroke="#187818" stroke-width="0.700"/></svg><svg class="a" style="left:925px;top:744px" width="17" height="17" viewBox="0 0 17 17" ><path d="M8.500 1v13M2 4h13M4 15.500h9" stroke="#181818" stroke-width="1.600"/><path d="M0.500 10l2-6l2 6zM12.500 10l2-6l2 6z" fill="#d81818" stroke="#181818" stroke-width="0.600"/><circle cx="8.500" cy="2" r="1.500" fill="#181818"/><path d="M0.500 10.500h4M12.500 10.500h4" stroke="#1838c8" stroke-width="1.800"/></svg><svg class="a" style="left:941px;top:745px" width="17" height="16" viewBox="0 0 17 16" ><rect x="6.500" y="0.500" width="10" height="8" fill="#a8ccf8" stroke="#4c6ca8"/><rect x="8" y="2" width="7" height="5" fill="#d8ecfc"/><rect x="0.500" y="5.500" width="10" height="8" fill="#a8ccf8" stroke="#4c6ca8"/><rect x="2" y="7" width="7" height="5" fill="#e4f0fc"/><path d="M3 15h6M10 10.500h5" stroke="#88a8d8" stroke-width="1.500"/></svg><svg class="a" style="left:960px;top:745px" width="18" height="17" viewBox="0 0 18 17" ><path d="M2 10c0-10 14-10 14 0v6h-14z" fill="#283848" stroke="#101820"/><circle cx="9" cy="7" r="2.600" fill="#e82828"/><path d="M3 13h9l-1.500-2.500M15 15h-9l1.500 2" stroke="#d8e028" stroke-width="1.800" fill="none"/><path d="M3 15.500h12" stroke="#38b838" stroke-width="1.500"/></svg><span class="a th" style="left:983px;top:746px;color:#fff;line-height:14px;letter-spacing:0.45px;font-size:12px">18:22</span></div></body></html>
